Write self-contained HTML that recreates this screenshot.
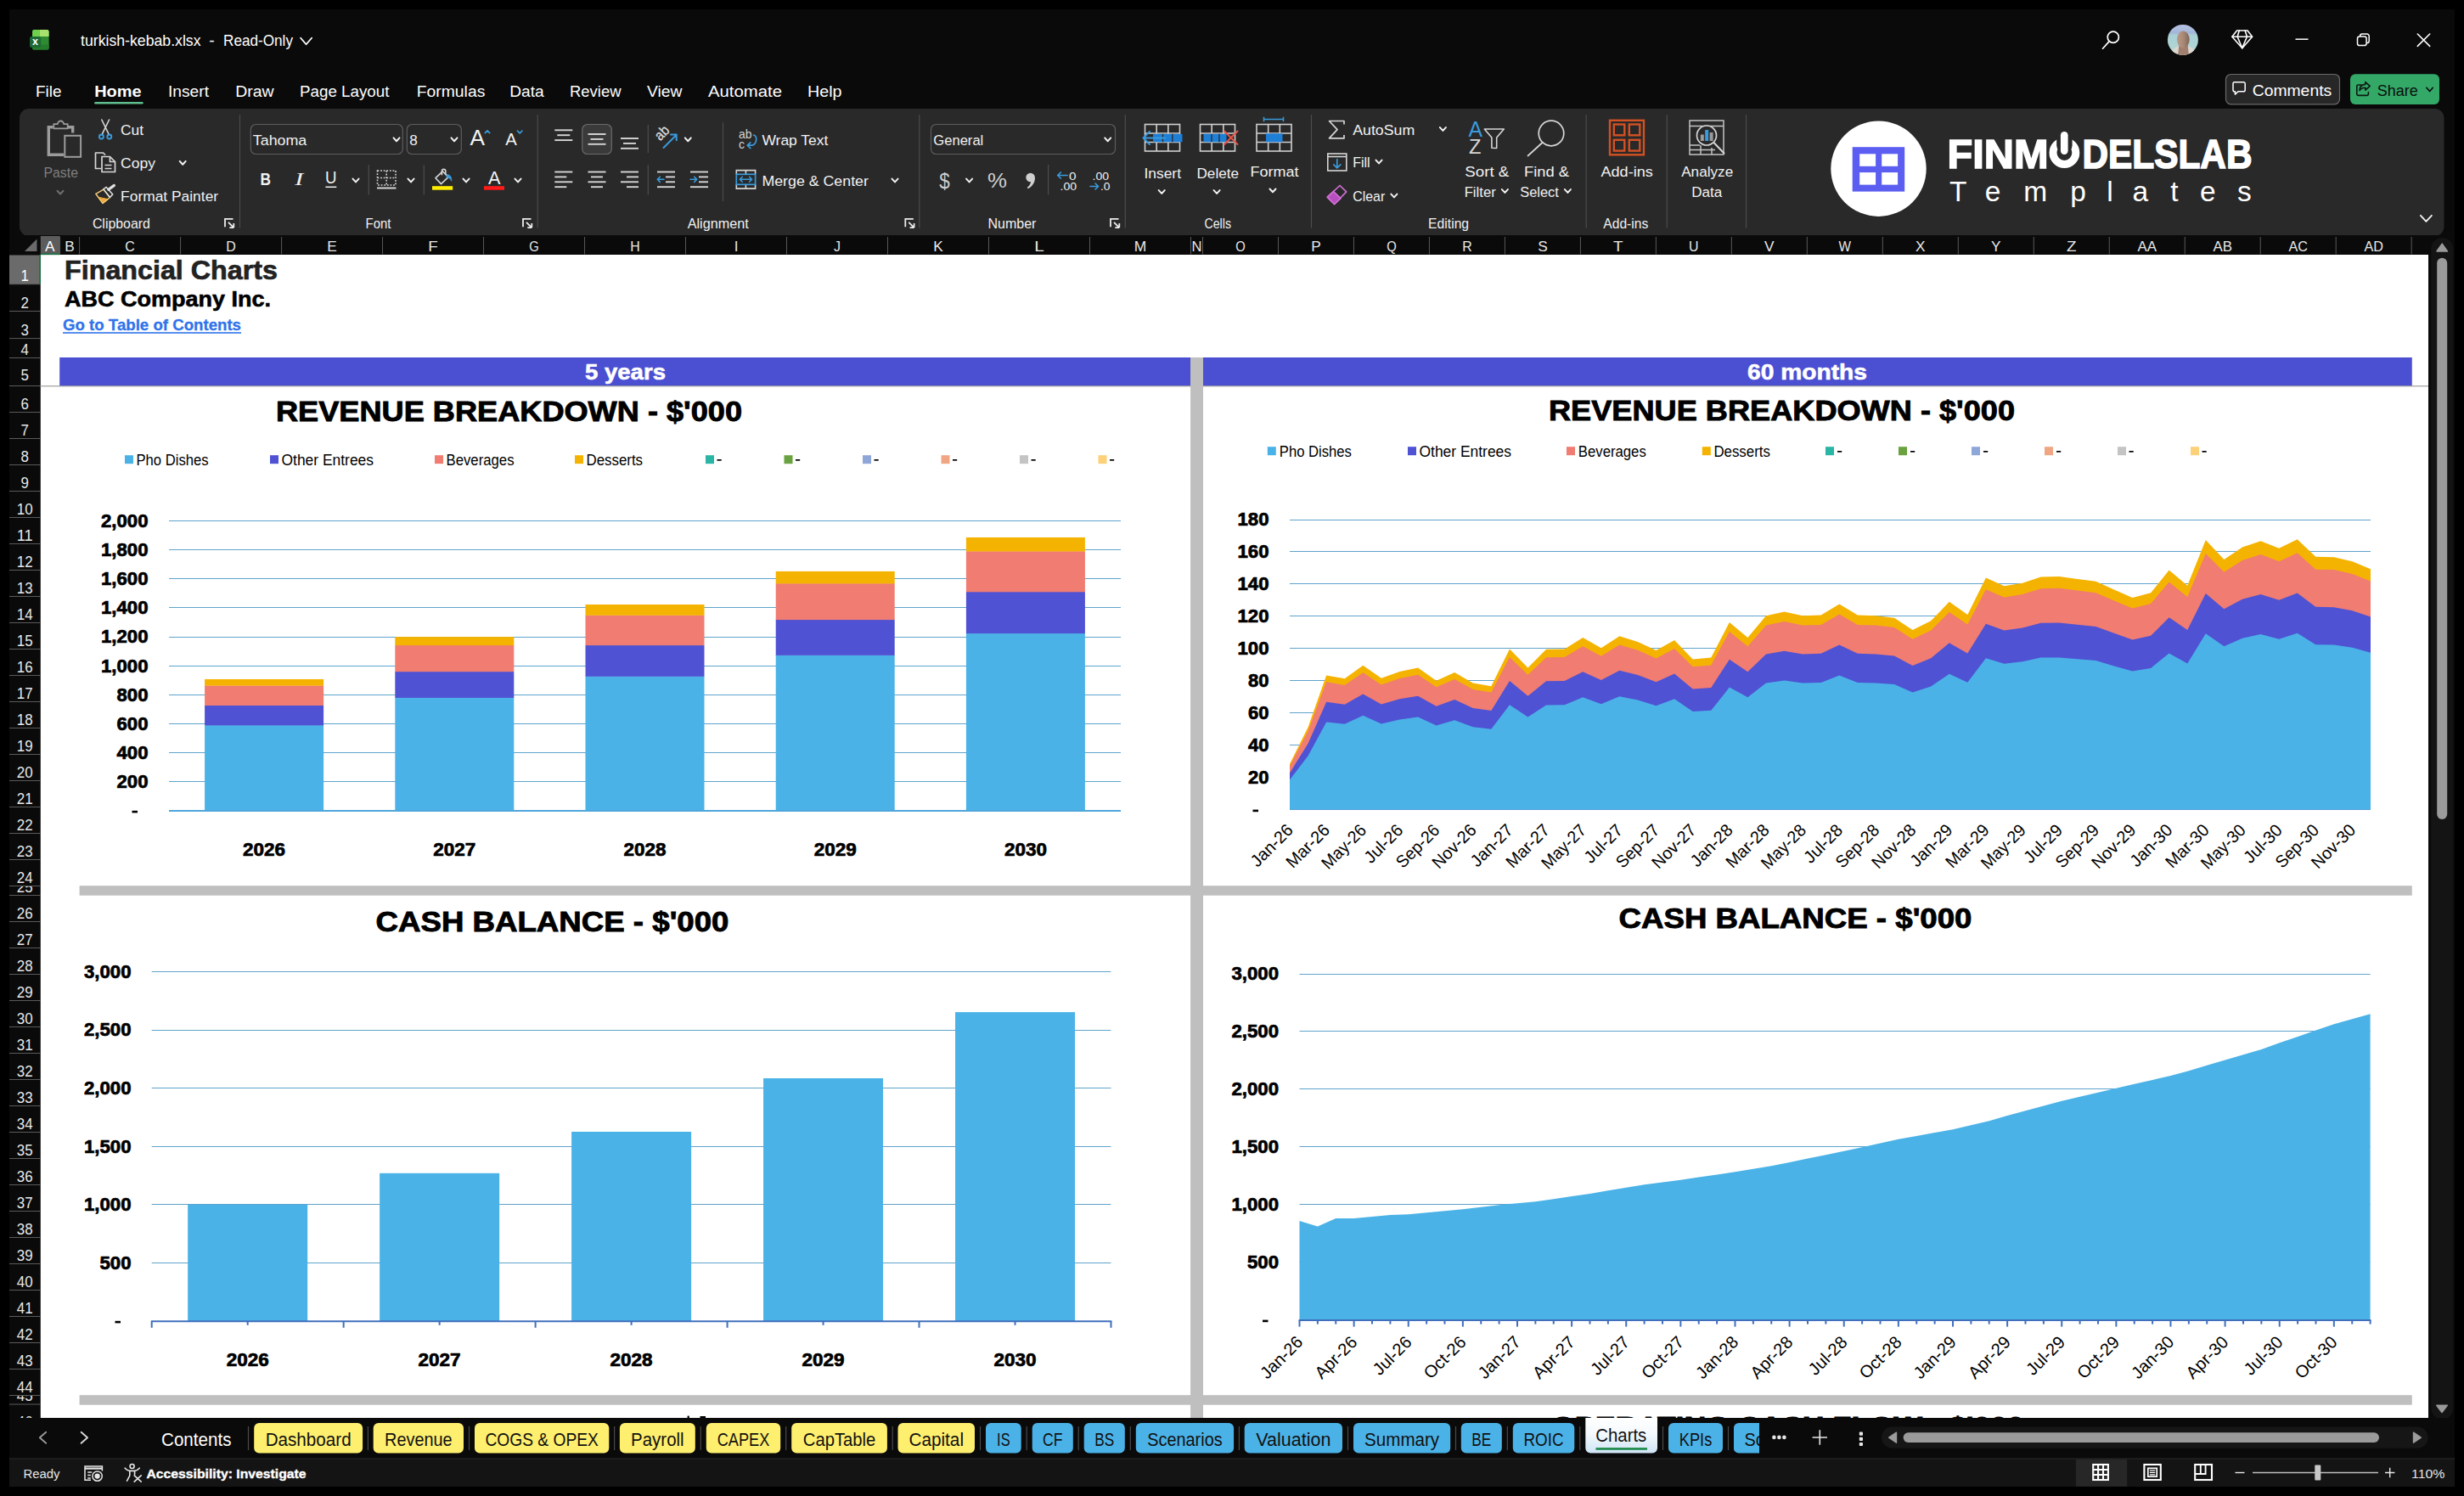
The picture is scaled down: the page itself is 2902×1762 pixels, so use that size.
<!DOCTYPE html>
<html lang="en">
<head>
<meta charset="utf-8">
<title>turkish-kebab.xlsx - Read-Only - Excel</title>
<style>
html,body{margin:0;padding:0;background:#000;}
body{width:2902px;height:1762px;overflow:hidden;position:relative;font-family:"Liberation Sans", sans-serif;}
.abs{position:absolute;display:block;}
#win{position:absolute;left:11px;top:11px;width:2880px;height:1740px;background:#0a0a0a;}
</style>
</head>
<body>
<div id="win"></div>
<svg class="abs titlebar" style="left:11px;top:11px" width="2880" height="117" viewBox="11 11 2880 117" font-family='"Liberation Sans", sans-serif'>
<g>
<rect x="38.1" y="35.1" width="19.5" height="23.5" fill="#2e8b32" rx="2.2"/>
<path d="M38.1 43.1 v-5.8 a2.2 2.2 0 0 1 2.2 -2.2 h6.3 v8 z" fill="#6ed04e" />
<path d="M46.6 35.1 h8.8 a2.2 2.2 0 0 1 2.2 2.2 v5.8 h-11 z" fill="#a8e26c" />
<path d="M38.1 52.5 h19.5 v3.9 a2.2 2.2 0 0 1 -2.2 2.2 h-15.1 a2.2 2.2 0 0 1 -2.2 -2.2 z" fill="#257d2c" />
<rect x="35.1" y="43.1" width="13" height="13" fill="#1d6a35" rx="2.2"/>
<text x="41.6" y="53.4" font-size="12.5" fill="#fff" font-weight="700" text-anchor="middle" >x</text>
</g>
<text x="95" y="54.4" font-size="18.2" fill="#fff" textLength="141.5" lengthAdjust="spacingAndGlyphs" >turkish-kebab.xlsx</text>
<text x="246.3" y="54.4" font-size="18.2" fill="#fff" textLength="6.5" lengthAdjust="spacingAndGlyphs" >-</text>
<text x="263" y="54.4" font-size="18.2" fill="#fff" textLength="82" lengthAdjust="spacingAndGlyphs" >Read-Only</text>
<path d="M354.1 44.75 l6.5 7.5 l6.5 -7.5" fill="none" stroke="#fff" stroke-width="1.8" stroke-linecap="round" stroke-linejoin="round"/>
<text x="42" y="114.2" font-size="19.2" fill="#fff" textLength="30.5" lengthAdjust="spacingAndGlyphs" >File</text>
<text x="111.2" y="114.2" font-size="19.2" fill="#fff" font-weight="700" textLength="55.5" lengthAdjust="spacingAndGlyphs" >Home</text>
<text x="198" y="114.2" font-size="19.2" fill="#fff" textLength="48" lengthAdjust="spacingAndGlyphs" >Insert</text>
<text x="277.2" y="114.2" font-size="19.2" fill="#fff" textLength="45.5" lengthAdjust="spacingAndGlyphs" >Draw</text>
<text x="353" y="114.2" font-size="19.2" fill="#fff" textLength="105.5" lengthAdjust="spacingAndGlyphs" >Page Layout</text>
<text x="490.8" y="114.2" font-size="19.2" fill="#fff" textLength="80.5" lengthAdjust="spacingAndGlyphs" >Formulas</text>
<text x="600.2" y="114.2" font-size="19.2" fill="#fff" textLength="40.5" lengthAdjust="spacingAndGlyphs" >Data</text>
<text x="671" y="114.2" font-size="19.2" fill="#fff" textLength="60.5" lengthAdjust="spacingAndGlyphs" >Review</text>
<text x="762" y="114.2" font-size="19.2" fill="#fff" textLength="41.5" lengthAdjust="spacingAndGlyphs" >View</text>
<text x="834" y="114.2" font-size="19.2" fill="#fff" textLength="87" lengthAdjust="spacingAndGlyphs" >Automate</text>
<text x="951" y="114.2" font-size="19.2" fill="#fff" textLength="40.5" lengthAdjust="spacingAndGlyphs" >Help</text>
<rect x="111.2" y="120" width="57.5" height="2.6" fill="#5fbe8d" rx="1.3"/>
<g fill="none" stroke="#fff" stroke-width="1.7" stroke-linecap="round"><circle cx="2488.8" cy="43.8" r="6.6"/><path d="M2484 48.9 L2476.5 57.2"/></g>
<defs><clipPath id="avc"><circle cx="2570.9" cy="46.9" r="18"/></clipPath><linearGradient id="avg" x1="0" y1="0" x2="0" y2="1"><stop offset="0" stop-color="#b9c3e4"/><stop offset="0.28" stop-color="#a3b6d8"/><stop offset="0.36" stop-color="#a9d0d6"/><stop offset="1" stop-color="#b3d8d2"/></linearGradient><linearGradient id="avf" x1="0" y1="0" x2="1" y2="0"><stop offset="0" stop-color="#bb9a88"/><stop offset="0.55" stop-color="#a88674"/><stop offset="1" stop-color="#7d6457"/></linearGradient></defs>
<g clip-path="url(#avc)"><rect x="2552" y="28" width="38" height="38" fill="url(#avg)"/><path d="M2556 66 c1 -7 5 -10 10 -11.5 h11 c5 1.500 9 4.500 10 11.500 z" fill="#ddd6cf"/><path d="M2566.200 54 h10.600 l1.200 12 h-13 z" fill="#a07f6e"/><ellipse cx="2571.300" cy="46.600" rx="7.400" ry="10.200" fill="url(#avf)"/></g>
<g fill="none" stroke="#fff" stroke-width="1.6" stroke-linejoin="round" stroke-linecap="round"><path d="M2634.5 36 h12.5 l5.6 7.2 l-11.8 13.6 l-11.9 -13.6 z"/><path d="M2629 43.2 h23.5 M2637.3 36 l-2.2 7.2 l5.7 13.4 M2644.2 36 l2.2 7.2 l-5.6 13.4"/></g>
<line x1="2703.5" y1="46.2" x2="2718.5" y2="46.2" stroke="#fff" stroke-width="1.5" />
<g fill="none" stroke="#fff" stroke-width="1.5"><rect x="2776.5" y="43" width="10.6" height="10.6" rx="2.4"/><path d="M2779.6 43 v-0.6 a2.4 2.4 0 0 1 2.4 -2.4 h5.6 a2.6 2.6 0 0 1 2.6 2.6 v5.6 a2.4 2.4 0 0 1 -2.4 2.4 h-0.6"/></g>
<path d="M2847.3 40 l14.4 14.4 M2861.7 40 l-14.4 14.4" stroke="#fff" stroke-width="1.6" stroke-linecap="round"/>
<rect x="2621.5" y="87.5" width="134" height="35.3" fill="#272727" rx="6" stroke="#6a6a6a" stroke-width="1.2"/>
<path d="M2630 98.5 a1.8 1.8 0 0 1 1.8 -1.8 h10.6 a1.8 1.8 0 0 1 1.8 1.8 v7.4 a1.8 1.8 0 0 1 -1.8 1.8 h-6.4 l-3.6 3.4 v-3.4 h-0.6 a1.8 1.8 0 0 1 -1.8 -1.8 z" fill="none" stroke="#fff" stroke-width="1.5" stroke-linejoin="round"/>
<text x="2652.7" y="112.9" font-size="18.4" fill="#fff" textLength="93.5" lengthAdjust="spacingAndGlyphs" >Comments</text>
<rect x="2768" y="87.2" width="105" height="35.8" fill="#33a867" rx="6"/>
<g fill="none" stroke="#0c1a12" stroke-width="1.6" stroke-linejoin="round" stroke-linecap="round"><path d="M2781 100 h-3.6 a1.6 1.6 0 0 0 -1.6 1.6 v9.2 a1.6 1.6 0 0 0 1.6 1.6 h10.4 a1.6 1.6 0 0 0 1.6 -1.6 v-2.2"/><path d="M2785.8 96.6 l5.4 4.8 l-5.4 4.8 v-3 c-3.6 0 -5.6 1.2 -6.8 3.4 c0 -4.2 2.4 -6.8 6.8 -7.2 z"/></g>
<text x="2799.8" y="112.9" font-size="18.4" fill="#0a0f0c" textLength="48" lengthAdjust="spacingAndGlyphs" >Share</text>
<path d="M2857.85 103.3 l3.75 4.2 l3.75 -4.2" fill="none" stroke="#0a0f0c" stroke-width="1.7" stroke-linecap="round" stroke-linejoin="round"/>
</svg>
<svg class="abs ribbon" style="left:11px;top:128px" width="2880" height="151" viewBox="11 128 2880 151" font-family='"Liberation Sans", sans-serif'>
<rect x="23" y="128" width="2855.5" height="150" fill="#292929" rx="11"/>
<g fill="none" stroke="#9c9c9c" stroke-width="3.4" stroke-linejoin="miter"><path d="M75 182.3 H57.3 V149.8 H62.5"/><path d="M80 149.8 H85.7 V156.5"/><path d="M63.3 151.3 v-5.2 h4.6 a3.6 3.6 0 0 1 7.2 0 h4.6 v5.2 z" stroke-width="1.8" stroke-linejoin="round"/><rect x="76.3" y="159.8" width="18.8" height="25" stroke-width="2" fill="#292929"/></g>
<text x="51.5" y="209.3" font-size="17.4" fill="#7f7f7f" textLength="40.5" lengthAdjust="spacingAndGlyphs" >Paste</text>
<path d="M67.5 224.7 l3.5 3.8 l3.5 -3.8" fill="none" stroke="#6f6f6f" stroke-width="2" stroke-linecap="round" stroke-linejoin="round"/>
<g fill="none" stroke-linecap="round"><path d="M119.8 141 l8.6 17.6 M128.6 141 l-8.6 17.6" stroke="#d6d6d6" stroke-width="1.6"/><circle cx="119.4" cy="161" r="2.5" stroke="#3a9bdc" stroke-width="1.9"/><circle cx="128.8" cy="161" r="2.5" stroke="#3a9bdc" stroke-width="1.9"/></g>
<text x="142.1" y="158.9" font-size="17.4" fill="#f2f2f2" textLength="27" lengthAdjust="spacingAndGlyphs" >Cut</text>
<g fill="none" stroke="#d6d6d6" stroke-width="1.7" stroke-linejoin="round"><path d="M119 198.5 h-6.5 v-18.5 h9 l2.5 2.5"/><path d="M120 184.5 h9.5 l6 6 v12 h-15.5 z"/><path d="M129.5 184.5 v6 h6"/><path d="M123.5 194.5 h8 M123.5 198.5 h8" stroke-width="1.3"/></g>
<text x="142.1" y="197.7" font-size="17.4" fill="#f2f2f2" textLength="41" lengthAdjust="spacingAndGlyphs" >Copy</text>
<path d="M211.7 189.9 l3.5 3.8 l3.5 -3.8" fill="none" stroke="#f2f2f2" stroke-width="2" stroke-linecap="round" stroke-linejoin="round"/>
<g stroke-linejoin="round" stroke-linecap="round"><path d="M117 232.5 l10.5 2.2 l-6.2 4.6 z" fill="#f0a838" stroke="#f0a838" stroke-width="1"/><path d="M112.8 228.3 l9.2 -5.2 l7.4 9.4 l-8.3 7 z" fill="none" stroke="#f2c879" stroke-width="1.5"/><path d="M121.8 222.8 l3.4 -2.4 l7.6 8.6 l-3.4 3.4 z" fill="none" stroke="#e0e0e0" stroke-width="1.5"/><path d="M127.8 223.3 l6.6 -4.9" fill="none" stroke="#e0e0e0" stroke-width="3.2"/></g>
<text x="142.1" y="236.9" font-size="17.4" fill="#f2f2f2" textLength="115" lengthAdjust="spacingAndGlyphs" >Format Painter</text>
<text x="108.9" y="268.5" font-size="16.2" fill="#f2f2f2" textLength="68" lengthAdjust="spacingAndGlyphs" >Clipboard</text>
<g fill="none" stroke="#ececec" stroke-width="1.8"><path d="M274.5 257.8 h-9.5 v9.5"/><path d="M269 261.8 l6 6 M275.3 268.1 v-5 M275.3 268.1 h-5"/></g>
<line x1="282.5" y1="135.3" x2="282.5" y2="268.5" stroke="#4c4c4c" stroke-width="1.2" />
<rect x="295.3" y="146.5" width="179" height="35" fill="none" rx="6" stroke="#5e5e5e" stroke-width="1.2"/>
<text x="297.8" y="170.7" font-size="17.4" fill="#f2f2f2" textLength="63.5" lengthAdjust="spacingAndGlyphs" >Tahoma</text>
<path d="M463.5 162.4 l3.5 3.8 l3.5 -3.8" fill="none" stroke="#f2f2f2" stroke-width="2" stroke-linecap="round" stroke-linejoin="round"/>
<rect x="479.3" y="146.5" width="64" height="35" fill="none" rx="6" stroke="#5e5e5e" stroke-width="1.2"/>
<text x="482.3" y="170.7" font-size="17.4" fill="#f2f2f2" textLength="9.5" lengthAdjust="spacingAndGlyphs" >8</text>
<path d="M531.5 162.4 l3.5 3.8 l3.5 -3.8" fill="none" stroke="#f2f2f2" stroke-width="2" stroke-linecap="round" stroke-linejoin="round"/>
<text x="553.5" y="171.3" font-size="25.5" fill="#f2f2f2" textLength="17.5" lengthAdjust="spacingAndGlyphs" >A</text>
<path d="M571.3 156.6 l2.7 -2.8 l2.7 2.8" fill="none" stroke="#3a9bdc" stroke-width="1.7" stroke-linecap="round" stroke-linejoin="round"/>
<text x="595.3" y="171.3" font-size="20.5" fill="#f2f2f2" textLength="13.5" lengthAdjust="spacingAndGlyphs" >A</text>
<path d="M609.5 154.2 l2.7 2.8 l2.7 -2.8" fill="none" stroke="#3a9bdc" stroke-width="1.7" stroke-linecap="round" stroke-linejoin="round"/>
<text x="306.5" y="217.8" font-size="20.5" fill="#f2f2f2" font-weight="700" textLength="12.5" lengthAdjust="spacingAndGlyphs" >B</text>
<text x="347.3" y="217.8" font-size="20.5" fill="#f2f2f2" textLength="10" lengthAdjust="spacingAndGlyphs" style="font-style:italic;font-family:'Liberation Serif',serif" >I</text>
<text x="383" y="215.8" font-size="19.5" fill="#f2f2f2" textLength="13.5" lengthAdjust="spacingAndGlyphs" >U</text>
<line x1="383.4" y1="220.3" x2="396.3" y2="220.3" stroke="#f2f2f2" stroke-width="1.5" />
<path d="M415.5 210.6 l3.5 3.8 l3.5 -3.8" fill="none" stroke="#f2f2f2" stroke-width="2" stroke-linecap="round" stroke-linejoin="round"/>
<line x1="434.3" y1="194.2" x2="434.3" y2="229.5" stroke="#4c4c4c" stroke-width="1.2" />
<g fill="none" stroke="#d6d6d6" stroke-width="1.6"><path d="M444.5 201 h21.5 v17 h-21.5 z M455.2 201 v17 M444.5 209.5 h21.5" stroke-dasharray="1.8 1.8"/><path d="M444 221.5 h22.5" stroke-width="2"/></g>
<path d="M480.5 210.6 l3.5 3.8 l3.5 -3.8" fill="none" stroke="#f2f2f2" stroke-width="2" stroke-linecap="round" stroke-linejoin="round"/>
<line x1="499.3" y1="194.2" x2="499.3" y2="229.5" stroke="#4c4c4c" stroke-width="1.2" />
<g fill="none" stroke="#d6d6d6" stroke-width="1.6" stroke-linejoin="round" stroke-linecap="round"><path d="M513 209.7 L519.5 216.6 L528 208.7 L521.3 201.8 Z"/><path d="M520.4 205.8 v-4.2 a2.2 2.2 0 0 1 4.4 0 v3.6"/></g>
<path d="M526.3 205.6 c4.2 0.2 6 3.6 5.3 7.6 c-0.8 -2.6 -2.4 -4 -5.6 -4.4 z" fill="#3a9bdc" stroke="#3a9bdc" stroke-width="0.8" stroke-linejoin="round"/>
<rect x="509" y="219.2" width="24.2" height="4.5" fill="#ffed00" />
<path d="M545.5 210.6 l3.5 3.8 l3.5 -3.8" fill="none" stroke="#f2f2f2" stroke-width="2" stroke-linecap="round" stroke-linejoin="round"/>
<text x="575" y="216.8" font-size="21.5" fill="#f2f2f2" textLength="14.5" lengthAdjust="spacingAndGlyphs" >A</text>
<rect x="570" y="219.2" width="24" height="4.5" fill="#ff1a1a" />
<path d="M606.5 210.6 l3.5 3.8 l3.5 -3.8" fill="none" stroke="#f2f2f2" stroke-width="2" stroke-linecap="round" stroke-linejoin="round"/>
<text x="430.5" y="268.5" font-size="16.2" fill="#f2f2f2" textLength="30" lengthAdjust="spacingAndGlyphs" >Font</text>
<g fill="none" stroke="#ececec" stroke-width="1.8"><path d="M625.5 257.8 h-9.5 v9.5"/><path d="M620 261.8 l6 6 M626.3 268.1 v-5 M626.3 268.1 h-5"/></g>
<line x1="633.2" y1="135.3" x2="633.2" y2="268.5" stroke="#4c4c4c" stroke-width="1.2" />
<line x1="653.3" y1="153.3" x2="674.3" y2="153.3" stroke="#d6d6d6" stroke-width="1.9" /><line x1="656.3" y1="159.2" x2="671.3" y2="159.2" stroke="#d6d6d6" stroke-width="1.9" /><line x1="653.3" y1="165.1" x2="674.3" y2="165.1" stroke="#d6d6d6" stroke-width="1.9" />
<rect x="685.8" y="146.5" width="34.5" height="35" fill="#3a3a3a" rx="6" stroke="#6b6b6b" stroke-width="1.2"/>
<line x1="692.5" y1="158" x2="713.5" y2="158" stroke="#d6d6d6" stroke-width="1.9" /><line x1="695.5" y1="163.9" x2="710.5" y2="163.9" stroke="#d6d6d6" stroke-width="1.9" /><line x1="692.5" y1="169.8" x2="713.5" y2="169.8" stroke="#d6d6d6" stroke-width="1.9" />
<line x1="731" y1="163" x2="752" y2="163" stroke="#d6d6d6" stroke-width="1.9" /><line x1="734" y1="168.9" x2="749" y2="168.9" stroke="#d6d6d6" stroke-width="1.9" /><line x1="731" y1="174.8" x2="752" y2="174.8" stroke="#d6d6d6" stroke-width="1.9" />
<line x1="763.3" y1="147" x2="763.3" y2="180" stroke="#4c4c4c" stroke-width="1.2" />
<text x="0" y="0" font-size="17" fill="#dcdcdc" textLength="17" lengthAdjust="spacingAndGlyphs" style="stroke:#dcdcdc;stroke-width:0.3px" transform="translate(777.5 166.5) rotate(-45)">ab</text>
<path d="M781.5 174 l15 -15 M790 158.6 h6.7 v6.7" fill="none" stroke="#3a9bdc" stroke-width="2" stroke-linecap="round" stroke-linejoin="round"/>
<path d="M806.8 162.4 l3.5 3.8 l3.5 -3.8" fill="none" stroke="#f2f2f2" stroke-width="2" stroke-linecap="round" stroke-linejoin="round"/>
<line x1="851.5" y1="144.2" x2="851.5" y2="237.2" stroke="#4c4c4c" stroke-width="1.2" />
<text x="870" y="162.5" font-size="14.5" fill="#d6d6d6" textLength="15.5" lengthAdjust="spacingAndGlyphs" >ab</text>
<text x="870" y="175" font-size="14.5" fill="#d6d6d6" textLength="7" lengthAdjust="spacingAndGlyphs" >c</text>
<path d="M887.5 159 c4.5 1 4.5 10 -1.5 12.2 h-5.5 M883.8 167.8 l-3.6 3.4 l3.6 3.4" fill="none" stroke="#3a9bdc" stroke-width="1.7" stroke-linecap="round" stroke-linejoin="round"/>
<text x="897.4" y="170.7" font-size="17.4" fill="#f2f2f2" textLength="78" lengthAdjust="spacingAndGlyphs" >Wrap Text</text>
<line x1="653.3" y1="202.5" x2="674.3" y2="202.5" stroke="#d6d6d6" stroke-width="1.9" /><line x1="653.3" y1="208.4" x2="667.3" y2="208.4" stroke="#d6d6d6" stroke-width="1.9" /><line x1="653.3" y1="214.3" x2="674.3" y2="214.3" stroke="#d6d6d6" stroke-width="1.9" /><line x1="653.3" y1="220.2" x2="667.3" y2="220.2" stroke="#d6d6d6" stroke-width="1.9" />
<line x1="692.5" y1="202.5" x2="713.5" y2="202.5" stroke="#d6d6d6" stroke-width="1.9" /><line x1="696" y1="208.4" x2="710" y2="208.4" stroke="#d6d6d6" stroke-width="1.9" /><line x1="692.5" y1="214.3" x2="713.5" y2="214.3" stroke="#d6d6d6" stroke-width="1.9" /><line x1="696" y1="220.2" x2="710" y2="220.2" stroke="#d6d6d6" stroke-width="1.9" />
<line x1="731" y1="202.5" x2="752" y2="202.5" stroke="#d6d6d6" stroke-width="1.9" /><line x1="738" y1="208.4" x2="752" y2="208.4" stroke="#d6d6d6" stroke-width="1.9" /><line x1="731" y1="214.3" x2="752" y2="214.3" stroke="#d6d6d6" stroke-width="1.9" /><line x1="738" y1="220.2" x2="752" y2="220.2" stroke="#d6d6d6" stroke-width="1.9" />
<line x1="763.3" y1="194.2" x2="763.3" y2="229.5" stroke="#4c4c4c" stroke-width="1.2" />
<line x1="774" y1="202.5" x2="795" y2="202.5" stroke="#d6d6d6" stroke-width="1.9" /><line x1="784" y1="208.4" x2="795" y2="208.4" stroke="#d6d6d6" stroke-width="1.9" /><line x1="784" y1="214.3" x2="795" y2="214.3" stroke="#d6d6d6" stroke-width="1.9" /><line x1="774" y1="220.2" x2="795" y2="220.2" stroke="#d6d6d6" stroke-width="1.9" />
<path d="M782 211.3 h-7.5 M777.3 208.2 l-3 3.1 l3 3.1" fill="none" stroke="#3a9bdc" stroke-width="1.6" stroke-linecap="round" stroke-linejoin="round"/>
<line x1="813" y1="202.5" x2="834" y2="202.5" stroke="#d6d6d6" stroke-width="1.9" /><line x1="823" y1="208.4" x2="834" y2="208.4" stroke="#d6d6d6" stroke-width="1.9" /><line x1="823" y1="214.3" x2="834" y2="214.3" stroke="#d6d6d6" stroke-width="1.9" /><line x1="813" y1="220.2" x2="834" y2="220.2" stroke="#d6d6d6" stroke-width="1.9" />
<path d="M813 211.3 h7.5 M817.7 208.2 l3 3.1 l-3 3.1" fill="none" stroke="#3a9bdc" stroke-width="1.6" stroke-linecap="round" stroke-linejoin="round"/>
<g fill="none" stroke="#d6d6d6" stroke-width="1.6"><path d="M867.3 205.3 v-4.7 h22.3 v4.7 M867.3 217.3 v4.8 h22.3 v-4.8 M878.4 200.6 v4.7 M878.4 217.3 v4.8"/></g>
<rect x="867.3" y="205.3" width="22.3" height="12" fill="none" stroke="#3a9bdc" stroke-width="1.7"/>
<path d="M871.3 211.3 h14.3 M874.3 208.3 l-3 3 l3 3 M882.6 208.3 l3 3 l-3 3" fill="none" stroke="#3a9bdc" stroke-width="1.6" stroke-linecap="round" stroke-linejoin="round"/>
<text x="897.4" y="218.9" font-size="17.4" fill="#f2f2f2" textLength="125.5" lengthAdjust="spacingAndGlyphs" >Merge &amp; Center</text>
<path d="M1050.5 210.6 l3.5 3.8 l3.5 -3.8" fill="none" stroke="#f2f2f2" stroke-width="2" stroke-linecap="round" stroke-linejoin="round"/>
<text x="809.7" y="268.5" font-size="16.2" fill="#f2f2f2" textLength="72" lengthAdjust="spacingAndGlyphs" >Alignment</text>
<g fill="none" stroke="#ececec" stroke-width="1.8"><path d="M1075.8 257.8 h-9.5 v9.5"/><path d="M1070.3 261.8 l6 6 M1076.6 268.1 v-5 M1076.6 268.1 h-5"/></g>
<line x1="1082.8" y1="135.3" x2="1082.8" y2="268.5" stroke="#4c4c4c" stroke-width="1.2" />
<rect x="1096.5" y="146.5" width="217" height="35" fill="none" rx="6" stroke="#5e5e5e" stroke-width="1.2"/>
<text x="1099.3" y="170.7" font-size="17.4" fill="#f2f2f2" textLength="59" lengthAdjust="spacingAndGlyphs" >General</text>
<path d="M1301.2 162.4 l3.5 3.8 l3.5 -3.8" fill="none" stroke="#f2f2f2" stroke-width="2" stroke-linecap="round" stroke-linejoin="round"/>
<text x="1106.3" y="221.5" font-size="25" fill="#cfcfcf" textLength="12.5" lengthAdjust="spacingAndGlyphs" >$</text>
<path d="M1138.1 210.6 l3.5 3.8 l3.5 -3.8" fill="none" stroke="#f2f2f2" stroke-width="2" stroke-linecap="round" stroke-linejoin="round"/>
<text x="1163" y="220.5" font-size="23.5" fill="#cfcfcf" textLength="23" lengthAdjust="spacingAndGlyphs" >%</text>
<circle cx="1213.6" cy="209" r="5.3" fill="#cfcfcf"/>
<path d="M1218.9 209 c0.2 6 -3 10.6 -8.2 13.2 l-0.9 -1.4 c2.8 -2.2 4.3 -4.8 4.4 -7.6 z" fill="#cfcfcf" />
<line x1="1234.6" y1="194" x2="1234.6" y2="229.5" stroke="#4c4c4c" stroke-width="1.2" />
<text x="1259" y="211.8" font-size="13.5" fill="#f2f2f2" textLength="8.5" lengthAdjust="spacingAndGlyphs" >0</text>
<text x="1248.5" y="224" font-size="13.5" fill="#f2f2f2" textLength="19.5" lengthAdjust="spacingAndGlyphs" >.00</text>
<path d="M1257 206.5 h-11 M1249.3 203 l-3.6 3.5 l3.6 3.5" fill="none" stroke="#3a9bdc" stroke-width="1.7" stroke-linecap="round" stroke-linejoin="round"/>
<text x="1286.5" y="211.8" font-size="13.5" fill="#f2f2f2" textLength="19.5" lengthAdjust="spacingAndGlyphs" >.00</text>
<text x="1296" y="224" font-size="13.5" fill="#f2f2f2" textLength="11.5" lengthAdjust="spacingAndGlyphs" >.0</text>
<path d="M1284 219.5 h9.5 M1290 216 l3.6 3.5 l-3.6 3.5" fill="none" stroke="#3a9bdc" stroke-width="1.6" stroke-linecap="round" stroke-linejoin="round"/>
<text x="1163.4" y="268.5" font-size="16.2" fill="#f2f2f2" textLength="57" lengthAdjust="spacingAndGlyphs" >Number</text>
<g fill="none" stroke="#ececec" stroke-width="1.8"><path d="M1317.5 257.8 h-9.5 v9.5"/><path d="M1312 261.8 l6 6 M1318.3 268.1 v-5 M1318.3 268.1 h-5"/></g>
<line x1="1325.3" y1="135.3" x2="1325.3" y2="268.5" stroke="#4c4c4c" stroke-width="1.2" />
<g fill="none" stroke="#d0d0d0" stroke-width="1.6"><rect x="1348.5" y="146.5" width="41" height="31.5"/><path d="M1362.17 146.5 v31.5 M1375.83 146.5 v31.5 M1348.5 157 h41 M1348.5 167.5 h41 "/></g>
<rect x="1358" y="157.8" width="34.5" height="9.5" fill="#1e7fd6" />
<line x1="1369.5" y1="157.8" x2="1369.5" y2="167.3" stroke="#292929" stroke-width="1.3" />
<line x1="1380.8" y1="157.8" x2="1380.8" y2="167.3" stroke="#292929" stroke-width="1.3" />
<path d="M1372 162.5 h-25 M1354 155 l-7.5 7.5 l7.5 7.5" fill="none" stroke="#3a9bdc" stroke-width="2" stroke-linecap="round" stroke-linejoin="round"/>
<text x="1347.5" y="210.2" font-size="17.4" fill="#f2f2f2" textLength="43.5" lengthAdjust="spacingAndGlyphs" >Insert</text>
<path d="M1364.7 224.1 l3.5 3.8 l3.5 -3.8" fill="none" stroke="#f2f2f2" stroke-width="2" stroke-linecap="round" stroke-linejoin="round"/>
<g fill="none" stroke="#d0d0d0" stroke-width="1.6"><rect x="1413.5" y="146.5" width="41" height="31.5"/><path d="M1427.17 146.5 v31.5 M1440.83 146.5 v31.5 M1413.5 157 h41 M1413.5 167.5 h41 "/></g>
<rect x="1417.5" y="157.8" width="27" height="9.5" fill="#1e7fd6" />
<line x1="1427" y1="157.8" x2="1427" y2="167.3" stroke="#292929" stroke-width="1.3" />
<line x1="1436" y1="157.8" x2="1436" y2="167.3" stroke="#292929" stroke-width="1.3" />
<path d="M1442 154.5 l15.5 15.5 M1457.5 154.5 l-15.5 15.5" fill="none" stroke="#e8524a" stroke-width="2" stroke-linecap="round"/>
<text x="1409.5" y="210.2" font-size="17.4" fill="#f2f2f2" textLength="49.5" lengthAdjust="spacingAndGlyphs" >Delete</text>
<path d="M1429.6 224.1 l3.5 3.8 l3.5 -3.8" fill="none" stroke="#f2f2f2" stroke-width="2" stroke-linecap="round" stroke-linejoin="round"/>
<g fill="none" stroke="#d0d0d0" stroke-width="1.6"><rect x="1480" y="146.5" width="41" height="31.5"/><path d="M1493.67 146.5 v31.5 M1507.33 146.5 v31.5 M1480 157 h41 M1480 167.5 h41 "/></g>
<rect x="1491" y="157.3" width="19.5" height="10" fill="#1e7fd6" />
<path d="M1488.5 140.5 h23 M1488.5 137.8 v5.4 M1511.5 137.8 v5.4" fill="none" stroke="#3a9bdc" stroke-width="1.5" />
<text x="1472.5" y="207.8" font-size="17.4" fill="#f2f2f2" textLength="57" lengthAdjust="spacingAndGlyphs" >Format</text>
<path d="M1495.5 222.5 l3.5 3.8 l3.5 -3.8" fill="none" stroke="#f2f2f2" stroke-width="2" stroke-linecap="round" stroke-linejoin="round"/>
<text x="1418.5" y="268.5" font-size="16.2" fill="#f2f2f2" textLength="31.5" lengthAdjust="spacingAndGlyphs" >Cells</text>
<line x1="1544.5" y1="135.3" x2="1544.5" y2="268.5" stroke="#4c4c4c" stroke-width="1.2" />
<path d="M1583 146.5 v-4 h-17.5 l9.5 10.2 l-9.5 10.2 h17.5 v-4" fill="none" stroke="#d6d6d6" stroke-width="1.7" stroke-linejoin="round"/>
<text x="1593.2" y="159.1" font-size="17.4" fill="#f2f2f2" textLength="73" lengthAdjust="spacingAndGlyphs" >AutoSum</text>
<path d="M1695.9 150.1 l3.5 3.8 l3.5 -3.8" fill="none" stroke="#f2f2f2" stroke-width="2" stroke-linecap="round" stroke-linejoin="round"/>
<g fill="none" stroke="#d6d6d6" stroke-width="1.6"><rect x="1563.8" y="181" width="22" height="20"/><path d="M1563.8 184.5 h22"/></g>
<path d="M1574.8 187.5 v10 M1570.8 193.8 l4 4 l4 -4" fill="none" stroke="#3a9bdc" stroke-width="1.7" stroke-linecap="round" stroke-linejoin="round"/>
<text x="1593.2" y="197.4" font-size="17.4" fill="#f2f2f2" textLength="20.5" lengthAdjust="spacingAndGlyphs" >Fill</text>
<path d="M1620.5 188.6 l3.5 3.8 l3.5 -3.8" fill="none" stroke="#f2f2f2" stroke-width="2" stroke-linecap="round" stroke-linejoin="round"/>
<g stroke="#cf6fd3" stroke-width="1.7" stroke-linejoin="round"><path d="M1563.3 232.1 L1578 218.5 L1585.7 225.8 L1571.6 240.5 Z" fill="none"/><path d="M1563.3 232.1 L1570.6 225.5 L1579 233.6 L1571.6 240.5 Z" fill="#b84fbe"/></g>
<text x="1593.2" y="237" font-size="17.4" fill="#f2f2f2" textLength="38" lengthAdjust="spacingAndGlyphs" >Clear</text>
<path d="M1638.4 228.6 l3.5 3.8 l3.5 -3.8" fill="none" stroke="#f2f2f2" stroke-width="2" stroke-linecap="round" stroke-linejoin="round"/>
<text x="1729.6" y="160.8" font-size="26" fill="#3a9bdc" textLength="16.5" lengthAdjust="spacingAndGlyphs" >A</text>
<text x="1730" y="181.4" font-size="24" fill="#d6d6d6" textLength="14.5" lengthAdjust="spacingAndGlyphs" >Z</text>
<path d="M1748.3 152 h23 l-8.6 10 v12.5 l-5.8 -0.2 v-12.3 z" fill="none" stroke="#d6d6d6" stroke-width="1.6" stroke-linejoin="round"/>
<text x="1725.3" y="208" font-size="17.4" fill="#f2f2f2" textLength="52" lengthAdjust="spacingAndGlyphs" >Sort &amp;</text>
<text x="1724.7" y="232.4" font-size="17.4" fill="#f2f2f2" textLength="37" lengthAdjust="spacingAndGlyphs" >Filter</text>
<path d="M1768.9 223.1 l3.5 3.8 l3.5 -3.8" fill="none" stroke="#f2f2f2" stroke-width="2" stroke-linecap="round" stroke-linejoin="round"/>
<g fill="none" stroke="#d6d6d6" stroke-width="1.7" stroke-linecap="round"><circle cx="1827" cy="157" r="14.8"/><path d="M1816.5 168 l-17 15.5"/></g>
<text x="1795.1" y="208" font-size="17.4" fill="#f2f2f2" textLength="53" lengthAdjust="spacingAndGlyphs" >Find &amp;</text>
<text x="1790.3" y="232.4" font-size="17.4" fill="#f2f2f2" textLength="45.5" lengthAdjust="spacingAndGlyphs" >Select</text>
<path d="M1842.9 223.1 l3.5 3.8 l3.5 -3.8" fill="none" stroke="#f2f2f2" stroke-width="2" stroke-linecap="round" stroke-linejoin="round"/>
<text x="1682.1" y="268.5" font-size="16.2" fill="#f2f2f2" textLength="48" lengthAdjust="spacingAndGlyphs" >Editing</text>
<line x1="1868.2" y1="135.3" x2="1868.2" y2="268.5" stroke="#4c4c4c" stroke-width="1.2" />
<g fill="none" stroke="#d35123" stroke-width="2.4"><rect x="1896" y="141.8" width="40" height="40.5"/><rect x="1900.8" y="146.5" width="12.5" height="12.8"/><rect x="1918.8" y="146.5" width="12.5" height="12.8"/><rect x="1900.8" y="164.8" width="12.5" height="12.8"/><rect x="1918.8" y="164.8" width="12.5" height="12.8"/></g>
<text x="1885.4" y="208" font-size="17.4" fill="#f2f2f2" textLength="61.5" lengthAdjust="spacingAndGlyphs" >Add-ins</text>
<text x="1888.3" y="268.5" font-size="16.2" fill="#f2f2f2" textLength="53" lengthAdjust="spacingAndGlyphs" >Add-ins</text>
<line x1="1963.3" y1="135.3" x2="1963.3" y2="268.5" stroke="#4c4c4c" stroke-width="1.2" />
<g fill="none" stroke="#c4c4c4" stroke-width="1.5"><rect x="1990" y="142" width="40" height="40"/><path d="M1990 148.5 h40 M1990 171 h12 M1990 176.5 h30 M2003 171 v11 M2016 174 v8"/></g>
<circle cx="2010" cy="159.5" r="11.5" fill="#292929" stroke="#d6d6d6" stroke-width="1.7"/>
<rect x="2002.8" y="158.5" width="4" height="7.5" fill="#9a9a9a" />
<rect x="2008.2" y="153" width="4" height="13" fill="#3a9bdc" />
<rect x="2013.6" y="156" width="4" height="10" fill="#9a9a9a" />
<line x1="2018.5" y1="168" x2="2031" y2="181" stroke="#d6d6d6" stroke-width="2" />
<text x="1980.2" y="208" font-size="17.4" fill="#f2f2f2" textLength="61" lengthAdjust="spacingAndGlyphs" >Analyze</text>
<text x="1992.2" y="232.4" font-size="17.4" fill="#f2f2f2" textLength="36" lengthAdjust="spacingAndGlyphs" >Data</text>
<line x1="2056.5" y1="135.3" x2="2056.5" y2="268.5" stroke="#4c4c4c" stroke-width="1.2" />
<circle cx="2212.5" cy="198.7" r="56.2" fill="#fff"/>
<rect x="2181.7" y="173.2" width="61.5" height="52.4" fill="#5b5ef0" />
<rect x="2190.2" y="181.3" width="18.9" height="14.5" fill="#fff" />
<rect x="2190.2" y="203.1" width="18.9" height="14.5" fill="#fff" />
<rect x="2216.2" y="181.3" width="18.9" height="14.5" fill="#fff" />
<rect x="2216.2" y="203.1" width="18.9" height="14.5" fill="#fff" />
<text x="2293.5" y="197.6" font-size="48.8" fill="#fff" font-weight="700" textLength="119" lengthAdjust="spacingAndGlyphs" style="stroke:#fff;stroke-width:1.6px" >FINM</text>
<circle cx="2431.4" cy="180" r="13.4" fill="none" stroke="#fff" stroke-width="9"/>
<rect x="2422.2" y="150.5" width="18.4" height="30" fill="#292929" rx="9.2"/>
<rect x="2426.9" y="154.9" width="8.7" height="27" fill="#fff" rx="4.3"/>
<text x="2452.5" y="197.6" font-size="48.8" fill="#fff" font-weight="700" textLength="200" lengthAdjust="spacingAndGlyphs" style="stroke:#fff;stroke-width:1.6px" >DELSLAB</text>
<text x="2306.2" y="236.9" font-size="33.5" fill="#fff" text-anchor="middle" >T</text>
<text x="2347" y="236.9" font-size="33.5" fill="#fff" text-anchor="middle" >e</text>
<text x="2397.2" y="236.9" font-size="33.5" fill="#fff" text-anchor="middle" >m</text>
<text x="2447.6" y="236.9" font-size="33.5" fill="#fff" text-anchor="middle" >p</text>
<text x="2485.1" y="236.9" font-size="33.5" fill="#fff" text-anchor="middle" >l</text>
<text x="2520.9" y="236.9" font-size="33.5" fill="#fff" text-anchor="middle" >a</text>
<text x="2560.9" y="236.9" font-size="33.5" fill="#fff" text-anchor="middle" >t</text>
<text x="2600.3" y="236.9" font-size="33.5" fill="#fff" text-anchor="middle" >e</text>
<text x="2643.3" y="236.9" font-size="33.5" fill="#fff" text-anchor="middle" >s</text>
<path d="M2850.9 253.8 l6.5 7 l6.5 -7" fill="none" stroke="#f2f2f2" stroke-width="1.8" stroke-linecap="round" stroke-linejoin="round"/>
</svg>
<svg class="abs sheet" style="left:11px;top:277px" width="2849" height="1393" viewBox="11 277 2849 1393" font-family='"Liberation Sans", sans-serif'>
<defs><clipPath id="rowclip"><rect x="11" y="300" width="36.8" height="1370"/></clipPath></defs>
<rect x="11" y="277" width="2849" height="1393" fill="#0a0a0a" />
<rect x="47.8" y="300" width="2812.2" height="1370" fill="#fff" />
<rect x="47.8" y="278" width="22.8" height="22" fill="#5c5c5c" />
<rect x="47.8" y="298.4" width="22.8" height="1.8" fill="#1e7145" />
<path d="M43.5 281.5 V296 H29 Z" fill="#6a6a6a" />
<line x1="70.6" y1="279" x2="70.6" y2="299.5" stroke="#5a5a5a" stroke-width="1" />
<text x="53.05" y="296" font-size="17.2" fill="#fff" textLength="11.5" lengthAdjust="spacingAndGlyphs" >A</text>
<line x1="93.6" y1="279" x2="93.6" y2="299.5" stroke="#5a5a5a" stroke-width="1" />
<text x="76.35" y="296" font-size="17.2" fill="#e8e8e8" textLength="11.5" lengthAdjust="spacingAndGlyphs" >B</text>
<line x1="212.59" y1="279" x2="212.59" y2="299.5" stroke="#5a5a5a" stroke-width="1" />
<text x="147.34" y="296" font-size="17.2" fill="#e8e8e8" textLength="11.5" lengthAdjust="spacingAndGlyphs" >C</text>
<line x1="331.58" y1="279" x2="331.58" y2="299.5" stroke="#5a5a5a" stroke-width="1" />
<text x="266.33" y="296" font-size="17.2" fill="#e8e8e8" textLength="11.5" lengthAdjust="spacingAndGlyphs" >D</text>
<line x1="450.57" y1="279" x2="450.57" y2="299.5" stroke="#5a5a5a" stroke-width="1" />
<text x="385.32" y="296" font-size="17.2" fill="#e8e8e8" textLength="11.5" lengthAdjust="spacingAndGlyphs" >E</text>
<line x1="569.56" y1="279" x2="569.56" y2="299.5" stroke="#5a5a5a" stroke-width="1" />
<text x="504.31" y="296" font-size="17.2" fill="#e8e8e8" textLength="11.5" lengthAdjust="spacingAndGlyphs" >F</text>
<line x1="688.55" y1="279" x2="688.55" y2="299.5" stroke="#5a5a5a" stroke-width="1" />
<text x="623.3" y="296" font-size="17.2" fill="#e8e8e8" textLength="11.5" lengthAdjust="spacingAndGlyphs" >G</text>
<line x1="807.54" y1="279" x2="807.54" y2="299.5" stroke="#5a5a5a" stroke-width="1" />
<text x="742.29" y="296" font-size="17.2" fill="#e8e8e8" textLength="11.5" lengthAdjust="spacingAndGlyphs" >H</text>
<line x1="926.53" y1="279" x2="926.53" y2="299.5" stroke="#5a5a5a" stroke-width="1" />
<text x="867.03" y="296" font-size="17.2" fill="#e8e8e8" text-anchor="middle" >I</text>
<line x1="1045.52" y1="279" x2="1045.52" y2="299.5" stroke="#5a5a5a" stroke-width="1" />
<text x="982.02" y="296" font-size="17.2" fill="#e8e8e8" textLength="8" lengthAdjust="spacingAndGlyphs" >J</text>
<line x1="1164.51" y1="279" x2="1164.51" y2="299.5" stroke="#5a5a5a" stroke-width="1" />
<text x="1099.26" y="296" font-size="17.2" fill="#e8e8e8" textLength="11.5" lengthAdjust="spacingAndGlyphs" >K</text>
<line x1="1283.5" y1="279" x2="1283.5" y2="299.5" stroke="#5a5a5a" stroke-width="1" />
<text x="1218.26" y="296" font-size="17.2" fill="#e8e8e8" textLength="11.5" lengthAdjust="spacingAndGlyphs" >L</text>
<line x1="1402.49" y1="279" x2="1402.49" y2="299.5" stroke="#5a5a5a" stroke-width="1" />
<text x="1335.74" y="296" font-size="17.2" fill="#e8e8e8" textLength="14.5" lengthAdjust="spacingAndGlyphs" >M</text>
<line x1="1416.49" y1="279" x2="1416.49" y2="299.5" stroke="#5a5a5a" stroke-width="1" />
<text x="1403.49" y="296" font-size="17.2" fill="#e8e8e8" textLength="12" lengthAdjust="spacingAndGlyphs" >N</text>
<line x1="1505.47" y1="279" x2="1505.47" y2="299.5" stroke="#5a5a5a" stroke-width="1" />
<text x="1455.23" y="296" font-size="17.2" fill="#e8e8e8" textLength="11.5" lengthAdjust="spacingAndGlyphs" >O</text>
<line x1="1594.45" y1="279" x2="1594.45" y2="299.5" stroke="#5a5a5a" stroke-width="1" />
<text x="1544.21" y="296" font-size="17.2" fill="#e8e8e8" textLength="11.5" lengthAdjust="spacingAndGlyphs" >P</text>
<line x1="1683.43" y1="279" x2="1683.43" y2="299.5" stroke="#5a5a5a" stroke-width="1" />
<text x="1633.19" y="296" font-size="17.2" fill="#e8e8e8" textLength="11.5" lengthAdjust="spacingAndGlyphs" >Q</text>
<line x1="1772.41" y1="279" x2="1772.41" y2="299.5" stroke="#5a5a5a" stroke-width="1" />
<text x="1722.17" y="296" font-size="17.2" fill="#e8e8e8" textLength="11.5" lengthAdjust="spacingAndGlyphs" >R</text>
<line x1="1861.39" y1="279" x2="1861.39" y2="299.5" stroke="#5a5a5a" stroke-width="1" />
<text x="1811.15" y="296" font-size="17.2" fill="#e8e8e8" textLength="11.5" lengthAdjust="spacingAndGlyphs" >S</text>
<line x1="1950.37" y1="279" x2="1950.37" y2="299.5" stroke="#5a5a5a" stroke-width="1" />
<text x="1900.13" y="296" font-size="17.2" fill="#e8e8e8" textLength="11.5" lengthAdjust="spacingAndGlyphs" >T</text>
<line x1="2039.35" y1="279" x2="2039.35" y2="299.5" stroke="#5a5a5a" stroke-width="1" />
<text x="1989.11" y="296" font-size="17.2" fill="#e8e8e8" textLength="11.5" lengthAdjust="spacingAndGlyphs" >U</text>
<line x1="2128.33" y1="279" x2="2128.33" y2="299.5" stroke="#5a5a5a" stroke-width="1" />
<text x="2078.09" y="296" font-size="17.2" fill="#e8e8e8" textLength="11.5" lengthAdjust="spacingAndGlyphs" >V</text>
<line x1="2217.31" y1="279" x2="2217.31" y2="299.5" stroke="#5a5a5a" stroke-width="1" />
<text x="2165.57" y="296" font-size="17.2" fill="#e8e8e8" textLength="14.5" lengthAdjust="spacingAndGlyphs" >W</text>
<line x1="2306.29" y1="279" x2="2306.29" y2="299.5" stroke="#5a5a5a" stroke-width="1" />
<text x="2256.05" y="296" font-size="17.2" fill="#e8e8e8" textLength="11.5" lengthAdjust="spacingAndGlyphs" >X</text>
<line x1="2395.27" y1="279" x2="2395.27" y2="299.5" stroke="#5a5a5a" stroke-width="1" />
<text x="2345.03" y="296" font-size="17.2" fill="#e8e8e8" textLength="11.5" lengthAdjust="spacingAndGlyphs" >Y</text>
<line x1="2484.25" y1="279" x2="2484.25" y2="299.5" stroke="#5a5a5a" stroke-width="1" />
<text x="2434.01" y="296" font-size="17.2" fill="#e8e8e8" textLength="11.5" lengthAdjust="spacingAndGlyphs" >Z</text>
<line x1="2573.23" y1="279" x2="2573.23" y2="299.5" stroke="#5a5a5a" stroke-width="1" />
<text x="2517.49" y="296" font-size="17.2" fill="#e8e8e8" textLength="22.5" lengthAdjust="spacingAndGlyphs" >AA</text>
<line x1="2662.21" y1="279" x2="2662.21" y2="299.5" stroke="#5a5a5a" stroke-width="1" />
<text x="2606.47" y="296" font-size="17.2" fill="#e8e8e8" textLength="22.5" lengthAdjust="spacingAndGlyphs" >AB</text>
<line x1="2751.19" y1="279" x2="2751.19" y2="299.5" stroke="#5a5a5a" stroke-width="1" />
<text x="2695.45" y="296" font-size="17.2" fill="#e8e8e8" textLength="22.5" lengthAdjust="spacingAndGlyphs" >AC</text>
<line x1="2840.17" y1="279" x2="2840.17" y2="299.5" stroke="#5a5a5a" stroke-width="1" />
<text x="2784.43" y="296" font-size="17.2" fill="#e8e8e8" textLength="22.5" lengthAdjust="spacingAndGlyphs" >AD</text>
<rect x="11" y="300.5" width="36.8" height="34.2" fill="#6b6b6b" />
<rect x="46.2" y="300.5" width="1.8" height="34.2" fill="#1e7145" />
<g clip-path="url(#rowclip)">
<line x1="11" y1="334.7" x2="47.8" y2="334.7" stroke="#5a5a5a" stroke-width="1" />
<text x="24.5" y="330.5" font-size="18.8" fill="#fff" textLength="9.4" lengthAdjust="spacingAndGlyphs" >1</text>
<line x1="11" y1="366.5" x2="47.8" y2="366.5" stroke="#5a5a5a" stroke-width="1" />
<text x="24.5" y="362.9" font-size="18.8" fill="#e8e8e8" textLength="9.4" lengthAdjust="spacingAndGlyphs" >2</text>
<line x1="11" y1="398.6" x2="47.8" y2="398.6" stroke="#5a5a5a" stroke-width="1" />
<text x="24.5" y="395" font-size="18.8" fill="#e8e8e8" textLength="9.4" lengthAdjust="spacingAndGlyphs" >3</text>
<line x1="11" y1="421.5" x2="47.8" y2="421.5" stroke="#5a5a5a" stroke-width="1" />
<text x="24.5" y="417.9" font-size="18.8" fill="#e8e8e8" textLength="9.4" lengthAdjust="spacingAndGlyphs" >4</text>
<line x1="11" y1="454.5" x2="47.8" y2="454.5" stroke="#5a5a5a" stroke-width="1" />
<text x="24.5" y="447.9" font-size="18.8" fill="#e8e8e8" textLength="9.4" lengthAdjust="spacingAndGlyphs" >5</text>
<line x1="11" y1="485.5" x2="47.8" y2="485.5" stroke="#5a5a5a" stroke-width="1" />
<text x="24.5" y="481.9" font-size="18.8" fill="#e8e8e8" textLength="9.4" lengthAdjust="spacingAndGlyphs" >6</text>
<line x1="11" y1="516.5" x2="47.8" y2="516.5" stroke="#5a5a5a" stroke-width="1" />
<text x="24.5" y="512.9" font-size="18.8" fill="#e8e8e8" textLength="9.4" lengthAdjust="spacingAndGlyphs" >7</text>
<line x1="11" y1="547.5" x2="47.8" y2="547.5" stroke="#5a5a5a" stroke-width="1" />
<text x="24.5" y="543.9" font-size="18.8" fill="#e8e8e8" textLength="9.4" lengthAdjust="spacingAndGlyphs" >8</text>
<line x1="11" y1="578.5" x2="47.8" y2="578.5" stroke="#5a5a5a" stroke-width="1" />
<text x="24.5" y="574.9" font-size="18.8" fill="#e8e8e8" textLength="9.4" lengthAdjust="spacingAndGlyphs" >9</text>
<line x1="11" y1="609.5" x2="47.8" y2="609.5" stroke="#5a5a5a" stroke-width="1" />
<text x="19.8" y="605.9" font-size="18.8" fill="#e8e8e8" textLength="18.8" lengthAdjust="spacingAndGlyphs" >10</text>
<line x1="11" y1="640.5" x2="47.8" y2="640.5" stroke="#5a5a5a" stroke-width="1" />
<text x="19.8" y="636.9" font-size="18.8" fill="#e8e8e8" textLength="18.8" lengthAdjust="spacingAndGlyphs" >11</text>
<line x1="11" y1="671.5" x2="47.8" y2="671.5" stroke="#5a5a5a" stroke-width="1" />
<text x="19.8" y="667.9" font-size="18.8" fill="#e8e8e8" textLength="18.8" lengthAdjust="spacingAndGlyphs" >12</text>
<line x1="11" y1="702.5" x2="47.8" y2="702.5" stroke="#5a5a5a" stroke-width="1" />
<text x="19.8" y="698.9" font-size="18.8" fill="#e8e8e8" textLength="18.8" lengthAdjust="spacingAndGlyphs" >13</text>
<line x1="11" y1="733.5" x2="47.8" y2="733.5" stroke="#5a5a5a" stroke-width="1" />
<text x="19.8" y="729.9" font-size="18.8" fill="#e8e8e8" textLength="18.8" lengthAdjust="spacingAndGlyphs" >14</text>
<line x1="11" y1="764.5" x2="47.8" y2="764.5" stroke="#5a5a5a" stroke-width="1" />
<text x="19.8" y="760.9" font-size="18.8" fill="#e8e8e8" textLength="18.8" lengthAdjust="spacingAndGlyphs" >15</text>
<line x1="11" y1="795.5" x2="47.8" y2="795.5" stroke="#5a5a5a" stroke-width="1" />
<text x="19.8" y="791.9" font-size="18.8" fill="#e8e8e8" textLength="18.8" lengthAdjust="spacingAndGlyphs" >16</text>
<line x1="11" y1="826.5" x2="47.8" y2="826.5" stroke="#5a5a5a" stroke-width="1" />
<text x="19.8" y="822.9" font-size="18.8" fill="#e8e8e8" textLength="18.8" lengthAdjust="spacingAndGlyphs" >17</text>
<line x1="11" y1="857.5" x2="47.8" y2="857.5" stroke="#5a5a5a" stroke-width="1" />
<text x="19.8" y="853.9" font-size="18.8" fill="#e8e8e8" textLength="18.8" lengthAdjust="spacingAndGlyphs" >18</text>
<line x1="11" y1="888.5" x2="47.8" y2="888.5" stroke="#5a5a5a" stroke-width="1" />
<text x="19.8" y="884.9" font-size="18.8" fill="#e8e8e8" textLength="18.8" lengthAdjust="spacingAndGlyphs" >19</text>
<line x1="11" y1="919.5" x2="47.8" y2="919.5" stroke="#5a5a5a" stroke-width="1" />
<text x="19.8" y="915.9" font-size="18.8" fill="#e8e8e8" textLength="18.8" lengthAdjust="spacingAndGlyphs" >20</text>
<line x1="11" y1="950.5" x2="47.8" y2="950.5" stroke="#5a5a5a" stroke-width="1" />
<text x="19.8" y="946.9" font-size="18.8" fill="#e8e8e8" textLength="18.8" lengthAdjust="spacingAndGlyphs" >21</text>
<line x1="11" y1="981.5" x2="47.8" y2="981.5" stroke="#5a5a5a" stroke-width="1" />
<text x="19.8" y="977.9" font-size="18.8" fill="#e8e8e8" textLength="18.8" lengthAdjust="spacingAndGlyphs" >22</text>
<line x1="11" y1="1012.5" x2="47.8" y2="1012.5" stroke="#5a5a5a" stroke-width="1" />
<text x="19.8" y="1008.9" font-size="18.8" fill="#e8e8e8" textLength="18.8" lengthAdjust="spacingAndGlyphs" >23</text>
<line x1="11" y1="1043.5" x2="47.8" y2="1043.5" stroke="#5a5a5a" stroke-width="1" />
<text x="19.8" y="1039.9" font-size="18.8" fill="#e8e8e8" textLength="18.8" lengthAdjust="spacingAndGlyphs" >24</text>
<line x1="11" y1="1054.5" x2="47.8" y2="1054.5" stroke="#5a5a5a" stroke-width="1" />
<clipPath id="rc25"><rect x="11" y="1044" width="36.8" height="10.5"/></clipPath>
<g clip-path="url(#rc25)">
<text x="19.8" y="1050.9" font-size="18.8" fill="#e8e8e8" textLength="18.8" lengthAdjust="spacingAndGlyphs" >25</text>
</g>
<line x1="11" y1="1085.5" x2="47.8" y2="1085.5" stroke="#5a5a5a" stroke-width="1" />
<text x="19.8" y="1081.9" font-size="18.8" fill="#e8e8e8" textLength="18.8" lengthAdjust="spacingAndGlyphs" >26</text>
<line x1="11" y1="1116.5" x2="47.8" y2="1116.5" stroke="#5a5a5a" stroke-width="1" />
<text x="19.8" y="1112.9" font-size="18.8" fill="#e8e8e8" textLength="18.8" lengthAdjust="spacingAndGlyphs" >27</text>
<line x1="11" y1="1147.5" x2="47.8" y2="1147.5" stroke="#5a5a5a" stroke-width="1" />
<text x="19.8" y="1143.9" font-size="18.8" fill="#e8e8e8" textLength="18.8" lengthAdjust="spacingAndGlyphs" >28</text>
<line x1="11" y1="1178.5" x2="47.8" y2="1178.5" stroke="#5a5a5a" stroke-width="1" />
<text x="19.8" y="1174.9" font-size="18.8" fill="#e8e8e8" textLength="18.8" lengthAdjust="spacingAndGlyphs" >29</text>
<line x1="11" y1="1209.5" x2="47.8" y2="1209.5" stroke="#5a5a5a" stroke-width="1" />
<text x="19.8" y="1205.9" font-size="18.8" fill="#e8e8e8" textLength="18.8" lengthAdjust="spacingAndGlyphs" >30</text>
<line x1="11" y1="1240.5" x2="47.8" y2="1240.5" stroke="#5a5a5a" stroke-width="1" />
<text x="19.8" y="1236.9" font-size="18.8" fill="#e8e8e8" textLength="18.8" lengthAdjust="spacingAndGlyphs" >31</text>
<line x1="11" y1="1271.5" x2="47.8" y2="1271.5" stroke="#5a5a5a" stroke-width="1" />
<text x="19.8" y="1267.9" font-size="18.8" fill="#e8e8e8" textLength="18.8" lengthAdjust="spacingAndGlyphs" >32</text>
<line x1="11" y1="1302.5" x2="47.8" y2="1302.5" stroke="#5a5a5a" stroke-width="1" />
<text x="19.8" y="1298.9" font-size="18.8" fill="#e8e8e8" textLength="18.8" lengthAdjust="spacingAndGlyphs" >33</text>
<line x1="11" y1="1333.5" x2="47.8" y2="1333.5" stroke="#5a5a5a" stroke-width="1" />
<text x="19.8" y="1329.9" font-size="18.8" fill="#e8e8e8" textLength="18.8" lengthAdjust="spacingAndGlyphs" >34</text>
<line x1="11" y1="1364.5" x2="47.8" y2="1364.5" stroke="#5a5a5a" stroke-width="1" />
<text x="19.8" y="1360.9" font-size="18.8" fill="#e8e8e8" textLength="18.8" lengthAdjust="spacingAndGlyphs" >35</text>
<line x1="11" y1="1395.5" x2="47.8" y2="1395.5" stroke="#5a5a5a" stroke-width="1" />
<text x="19.8" y="1391.9" font-size="18.8" fill="#e8e8e8" textLength="18.8" lengthAdjust="spacingAndGlyphs" >36</text>
<line x1="11" y1="1426.5" x2="47.8" y2="1426.5" stroke="#5a5a5a" stroke-width="1" />
<text x="19.8" y="1422.9" font-size="18.8" fill="#e8e8e8" textLength="18.8" lengthAdjust="spacingAndGlyphs" >37</text>
<line x1="11" y1="1457.5" x2="47.8" y2="1457.5" stroke="#5a5a5a" stroke-width="1" />
<text x="19.8" y="1453.9" font-size="18.8" fill="#e8e8e8" textLength="18.8" lengthAdjust="spacingAndGlyphs" >38</text>
<line x1="11" y1="1488.5" x2="47.8" y2="1488.5" stroke="#5a5a5a" stroke-width="1" />
<text x="19.8" y="1484.9" font-size="18.8" fill="#e8e8e8" textLength="18.8" lengthAdjust="spacingAndGlyphs" >39</text>
<line x1="11" y1="1519.5" x2="47.8" y2="1519.5" stroke="#5a5a5a" stroke-width="1" />
<text x="19.8" y="1515.9" font-size="18.8" fill="#e8e8e8" textLength="18.8" lengthAdjust="spacingAndGlyphs" >40</text>
<line x1="11" y1="1550.5" x2="47.8" y2="1550.5" stroke="#5a5a5a" stroke-width="1" />
<text x="19.8" y="1546.9" font-size="18.8" fill="#e8e8e8" textLength="18.8" lengthAdjust="spacingAndGlyphs" >41</text>
<line x1="11" y1="1581.5" x2="47.8" y2="1581.5" stroke="#5a5a5a" stroke-width="1" />
<text x="19.8" y="1577.9" font-size="18.8" fill="#e8e8e8" textLength="18.8" lengthAdjust="spacingAndGlyphs" >42</text>
<line x1="11" y1="1612.5" x2="47.8" y2="1612.5" stroke="#5a5a5a" stroke-width="1" />
<text x="19.8" y="1608.9" font-size="18.8" fill="#e8e8e8" textLength="18.8" lengthAdjust="spacingAndGlyphs" >43</text>
<line x1="11" y1="1643.5" x2="47.8" y2="1643.5" stroke="#5a5a5a" stroke-width="1" />
<text x="19.8" y="1639.9" font-size="18.8" fill="#e8e8e8" textLength="18.8" lengthAdjust="spacingAndGlyphs" >44</text>
<line x1="11" y1="1654" x2="47.8" y2="1654" stroke="#5a5a5a" stroke-width="1" />
<clipPath id="rc45"><rect x="11" y="1644" width="36.8" height="10"/></clipPath>
<g clip-path="url(#rc45)">
<text x="19.8" y="1650.4" font-size="18.8" fill="#e8e8e8" textLength="18.8" lengthAdjust="spacingAndGlyphs" >45</text>
</g>
<line x1="11" y1="1685" x2="47.8" y2="1685" stroke="#5a5a5a" stroke-width="1" />
<text x="19.8" y="1681.4" font-size="18.8" fill="#e8e8e8" textLength="18.8" lengthAdjust="spacingAndGlyphs" >46</text>
</g>
<text x="76" y="329.3" font-size="31.5" fill="#222" font-weight="700" textLength="251" lengthAdjust="spacingAndGlyphs" style="stroke:#222;stroke-width:0.7px" >Financial Charts</text>
<text x="76" y="360.8" font-size="26" fill="#000" font-weight="700" textLength="243" lengthAdjust="spacingAndGlyphs" style="stroke:#000;stroke-width:0.6px" >ABC Company Inc.</text>
<text x="74" y="388.6" font-size="19" fill="#2f73ea" font-weight="700" textLength="210" lengthAdjust="spacingAndGlyphs" style="stroke:#2f73ea;stroke-width:0.3px" >Go to Table of Contents</text>
<rect x="74" y="391.2" width="210" height="1.6" fill="#2f73ea" />
<rect x="70.2" y="421" width="1332.29" height="33.5" fill="#4b4fd1" />
<rect x="1416.49" y="421" width="1424.28" height="33.5" fill="#4b4fd1" />
<line x1="47" y1="454.8" x2="2860" y2="454.8" stroke="#8c8c8c" stroke-width="1" />
<text x="689" y="447.3" font-size="26" fill="#fff" font-weight="700" textLength="95" lengthAdjust="spacingAndGlyphs" style="stroke:#fff;stroke-width:0.6px" >5 years</text>
<text x="2058" y="447.3" font-size="26" fill="#fff" font-weight="700" textLength="141" lengthAdjust="spacingAndGlyphs" style="stroke:#fff;stroke-width:0.6px" >60 months</text>
<rect x="1402.09" y="421" width="14.9" height="1249" fill="#bfbfbf" />
<rect x="93.6" y="1043.2" width="2747.17" height="11.5" fill="#bfbfbf" />
<rect x="93.6" y="1643.2" width="2747.17" height="11.5" fill="#bfbfbf" />
<text x="325" y="496" font-size="33.5" fill="#000" font-weight="700" textLength="549" lengthAdjust="spacingAndGlyphs" style="stroke:#000;stroke-width:0.9px" >REVENUE BREAKDOWN - $'000</text>
<rect x="147" y="536.2" width="10" height="10" fill="#4bb2e7" />
<text x="160.5" y="547.5" font-size="18.3" fill="#000" textLength="85" lengthAdjust="spacingAndGlyphs" >Pho Dishes</text>
<rect x="318" y="536.2" width="10" height="10" fill="#4f52d3" />
<text x="331.5" y="547.5" font-size="18.3" fill="#000" textLength="108.5" lengthAdjust="spacingAndGlyphs" >Other Entrees</text>
<rect x="512" y="536.2" width="10" height="10" fill="#f07c72" />
<text x="525.5" y="547.5" font-size="18.3" fill="#000" textLength="80" lengthAdjust="spacingAndGlyphs" >Beverages</text>
<rect x="677" y="536.2" width="10" height="10" fill="#f5b301" />
<text x="690.5" y="547.5" font-size="18.3" fill="#000" textLength="66.5" lengthAdjust="spacingAndGlyphs" >Desserts</text>
<rect x="831" y="536.2" width="10" height="10" fill="#2ab5a5" />
<rect x="844.5" y="541" width="5.2" height="1.7" fill="#000" />
<rect x="923.5" y="536.2" width="10" height="10" fill="#69a23f" />
<rect x="937" y="541" width="5.2" height="1.7" fill="#000" />
<rect x="1016" y="536.2" width="10" height="10" fill="#8fa6d9" />
<rect x="1029.5" y="541" width="5.2" height="1.7" fill="#000" />
<rect x="1108.5" y="536.2" width="10" height="10" fill="#f0a583" />
<rect x="1122" y="541" width="5.2" height="1.7" fill="#000" />
<rect x="1201" y="536.2" width="10" height="10" fill="#c4c4c4" />
<rect x="1214.5" y="541" width="5.2" height="1.7" fill="#000" />
<rect x="1293.5" y="536.2" width="10" height="10" fill="#fdd07a" />
<rect x="1307" y="541" width="5.2" height="1.7" fill="#000" />
<line x1="199" y1="920.5" x2="1320" y2="920.5" stroke="#5fa3cc" stroke-width="1" />
<line x1="199" y1="886.5" x2="1320" y2="886.5" stroke="#5fa3cc" stroke-width="1" />
<line x1="199" y1="852.5" x2="1320" y2="852.5" stroke="#5fa3cc" stroke-width="1" />
<line x1="199" y1="818.5" x2="1320" y2="818.5" stroke="#5fa3cc" stroke-width="1" />
<line x1="199" y1="784.5" x2="1320" y2="784.5" stroke="#5fa3cc" stroke-width="1" />
<line x1="199" y1="750.5" x2="1320" y2="750.5" stroke="#5fa3cc" stroke-width="1" />
<line x1="199" y1="715.5" x2="1320" y2="715.5" stroke="#5fa3cc" stroke-width="1" />
<line x1="199" y1="681.5" x2="1320" y2="681.5" stroke="#5fa3cc" stroke-width="1" />
<line x1="199" y1="647.5" x2="1320" y2="647.5" stroke="#5fa3cc" stroke-width="1" />
<line x1="199" y1="613.5" x2="1320" y2="613.5" stroke="#5fa3cc" stroke-width="1" />
<rect x="155.5" y="954.8" width="6.5" height="2.6" fill="#000" />
<text x="137.5" y="928.15" font-size="21.2" fill="#000" font-weight="700" textLength="37" lengthAdjust="spacingAndGlyphs" style="stroke:#000;stroke-width:0.7px" >200</text>
<text x="137.5" y="894" font-size="21.2" fill="#000" font-weight="700" textLength="37" lengthAdjust="spacingAndGlyphs" style="stroke:#000;stroke-width:0.7px" >400</text>
<text x="137.5" y="859.85" font-size="21.2" fill="#000" font-weight="700" textLength="37" lengthAdjust="spacingAndGlyphs" style="stroke:#000;stroke-width:0.7px" >600</text>
<text x="137.5" y="825.7" font-size="21.2" fill="#000" font-weight="700" textLength="37" lengthAdjust="spacingAndGlyphs" style="stroke:#000;stroke-width:0.7px" >800</text>
<text x="119" y="791.55" font-size="21.2" fill="#000" font-weight="700" textLength="55.5" lengthAdjust="spacingAndGlyphs" style="stroke:#000;stroke-width:0.7px" >1,000</text>
<text x="119" y="757.4" font-size="21.2" fill="#000" font-weight="700" textLength="55.5" lengthAdjust="spacingAndGlyphs" style="stroke:#000;stroke-width:0.7px" >1,200</text>
<text x="119" y="723.25" font-size="21.2" fill="#000" font-weight="700" textLength="55.5" lengthAdjust="spacingAndGlyphs" style="stroke:#000;stroke-width:0.7px" >1,400</text>
<text x="119" y="689.1" font-size="21.2" fill="#000" font-weight="700" textLength="55.5" lengthAdjust="spacingAndGlyphs" style="stroke:#000;stroke-width:0.7px" >1,600</text>
<text x="119" y="654.95" font-size="21.2" fill="#000" font-weight="700" textLength="55.5" lengthAdjust="spacingAndGlyphs" style="stroke:#000;stroke-width:0.7px" >1,800</text>
<text x="119" y="620.8" font-size="21.2" fill="#000" font-weight="700" textLength="55.5" lengthAdjust="spacingAndGlyphs" style="stroke:#000;stroke-width:0.7px" >2,000</text>
<rect x="241.1" y="854.09" width="140" height="100.91" fill="#4bb2e7" />
<rect x="241.1" y="830.69" width="140" height="23.69" fill="#4f52d3" />
<rect x="241.1" y="807.3" width="140" height="23.69" fill="#f07c72" />
<rect x="241.1" y="799.96" width="140" height="7.64" fill="#f5b301" />
<text x="286.1" y="1008" font-size="21.2" fill="#000" font-weight="700" textLength="50" lengthAdjust="spacingAndGlyphs" style="stroke:#000;stroke-width:0.7px" >2026</text>
<rect x="465.3" y="821.64" width="140" height="133.36" fill="#4bb2e7" />
<rect x="465.3" y="790.91" width="140" height="31.04" fill="#4f52d3" />
<rect x="465.3" y="759.83" width="140" height="31.38" fill="#f07c72" />
<rect x="465.3" y="750.1" width="140" height="10.03" fill="#f5b301" />
<text x="510.3" y="1008" font-size="21.2" fill="#000" font-weight="700" textLength="50" lengthAdjust="spacingAndGlyphs" style="stroke:#000;stroke-width:0.7px" >2027</text>
<rect x="689.5" y="796.54" width="140" height="158.46" fill="#4bb2e7" />
<rect x="689.5" y="759.83" width="140" height="37.01" fill="#4f52d3" />
<rect x="689.5" y="724.49" width="140" height="35.65" fill="#f07c72" />
<rect x="689.5" y="712.02" width="140" height="12.76" fill="#f5b301" />
<text x="734.5" y="1008" font-size="21.2" fill="#000" font-weight="700" textLength="50" lengthAdjust="spacingAndGlyphs" style="stroke:#000;stroke-width:0.7px" >2028</text>
<rect x="913.7" y="771.61" width="140" height="183.39" fill="#4bb2e7" />
<rect x="913.7" y="729.78" width="140" height="42.13" fill="#4f52d3" />
<rect x="913.7" y="687.09" width="140" height="42.99" fill="#f07c72" />
<rect x="913.7" y="672.92" width="140" height="14.47" fill="#f5b301" />
<text x="958.7" y="1008" font-size="21.2" fill="#000" font-weight="700" textLength="50" lengthAdjust="spacingAndGlyphs" style="stroke:#000;stroke-width:0.7px" >2029</text>
<rect x="1137.9" y="745.83" width="140" height="209.17" fill="#4bb2e7" />
<rect x="1137.9" y="697" width="140" height="49.13" fill="#4f52d3" />
<rect x="1137.9" y="649.19" width="140" height="48.11" fill="#f07c72" />
<rect x="1137.9" y="632.97" width="140" height="16.52" fill="#f5b301" />
<text x="1182.9" y="1008" font-size="21.2" fill="#000" font-weight="700" textLength="50" lengthAdjust="spacingAndGlyphs" style="stroke:#000;stroke-width:0.7px" >2030</text>
<line x1="199" y1="955" x2="1320" y2="955" stroke="#4ea5da" stroke-width="2.2" />
<text x="1824" y="494.5" font-size="33.5" fill="#000" font-weight="700" textLength="549" lengthAdjust="spacingAndGlyphs" style="stroke:#000;stroke-width:0.9px" >REVENUE BREAKDOWN - $'000</text>
<rect x="1492.8" y="526.2" width="10" height="10" fill="#4bb2e7" />
<text x="1506.8" y="537.5" font-size="18.3" fill="#000" textLength="85" lengthAdjust="spacingAndGlyphs" >Pho Dishes</text>
<rect x="1658" y="526.2" width="10" height="10" fill="#4f52d3" />
<text x="1671.5" y="537.5" font-size="18.3" fill="#000" textLength="108.5" lengthAdjust="spacingAndGlyphs" >Other Entrees</text>
<rect x="1845" y="526.2" width="10" height="10" fill="#f07c72" />
<text x="1858.8" y="537.5" font-size="18.3" fill="#000" textLength="80" lengthAdjust="spacingAndGlyphs" >Beverages</text>
<rect x="2004.8" y="526.2" width="10" height="10" fill="#f5b301" />
<text x="2018.4" y="537.5" font-size="18.3" fill="#000" textLength="66.5" lengthAdjust="spacingAndGlyphs" >Desserts</text>
<rect x="2150" y="526.2" width="10" height="10" fill="#2ab5a5" />
<rect x="2164" y="531" width="5.2" height="1.7" fill="#000" />
<rect x="2236" y="526.2" width="10" height="10" fill="#69a23f" />
<rect x="2250" y="531" width="5.2" height="1.7" fill="#000" />
<rect x="2322" y="526.2" width="10" height="10" fill="#8fa6d9" />
<rect x="2336" y="531" width="5.2" height="1.7" fill="#000" />
<rect x="2408" y="526.2" width="10" height="10" fill="#f0a583" />
<rect x="2422" y="531" width="5.2" height="1.7" fill="#000" />
<rect x="2494" y="526.2" width="10" height="10" fill="#c4c4c4" />
<rect x="2507.5" y="531" width="5.2" height="1.7" fill="#000" />
<rect x="2580" y="526.2" width="10" height="10" fill="#fdd07a" />
<rect x="2593.5" y="531" width="5.2" height="1.7" fill="#000" />
<line x1="1519" y1="915.5" x2="2792" y2="915.5" stroke="#5fa3cc" stroke-width="1" />
<line x1="1519" y1="877.5" x2="2792" y2="877.5" stroke="#5fa3cc" stroke-width="1" />
<line x1="1519" y1="839.5" x2="2792" y2="839.5" stroke="#5fa3cc" stroke-width="1" />
<line x1="1519" y1="801.5" x2="2792" y2="801.5" stroke="#5fa3cc" stroke-width="1" />
<line x1="1519" y1="763.5" x2="2792" y2="763.5" stroke="#5fa3cc" stroke-width="1" />
<line x1="1519" y1="725.5" x2="2792" y2="725.5" stroke="#5fa3cc" stroke-width="1" />
<line x1="1519" y1="687.5" x2="2792" y2="687.5" stroke="#5fa3cc" stroke-width="1" />
<line x1="1519" y1="649.5" x2="2792" y2="649.5" stroke="#5fa3cc" stroke-width="1" />
<line x1="1519" y1="612.5" x2="2792" y2="612.5" stroke="#5fa3cc" stroke-width="1" />
<rect x="1475.5" y="953.6" width="6.5" height="2.6" fill="#000" />
<text x="1470" y="923.12" font-size="21.2" fill="#000" font-weight="700" textLength="24.5" lengthAdjust="spacingAndGlyphs" style="stroke:#000;stroke-width:0.7px" >20</text>
<text x="1470" y="885.14" font-size="21.2" fill="#000" font-weight="700" textLength="24.5" lengthAdjust="spacingAndGlyphs" style="stroke:#000;stroke-width:0.7px" >40</text>
<text x="1470" y="847.17" font-size="21.2" fill="#000" font-weight="700" textLength="24.5" lengthAdjust="spacingAndGlyphs" style="stroke:#000;stroke-width:0.7px" >60</text>
<text x="1470" y="809.19" font-size="21.2" fill="#000" font-weight="700" textLength="24.5" lengthAdjust="spacingAndGlyphs" style="stroke:#000;stroke-width:0.7px" >80</text>
<text x="1457.5" y="771.21" font-size="21.2" fill="#000" font-weight="700" textLength="37" lengthAdjust="spacingAndGlyphs" style="stroke:#000;stroke-width:0.7px" >100</text>
<text x="1457.5" y="733.23" font-size="21.2" fill="#000" font-weight="700" textLength="37" lengthAdjust="spacingAndGlyphs" style="stroke:#000;stroke-width:0.7px" >120</text>
<text x="1457.5" y="695.26" font-size="21.2" fill="#000" font-weight="700" textLength="37" lengthAdjust="spacingAndGlyphs" style="stroke:#000;stroke-width:0.7px" >140</text>
<text x="1457.5" y="657.28" font-size="21.2" fill="#000" font-weight="700" textLength="37" lengthAdjust="spacingAndGlyphs" style="stroke:#000;stroke-width:0.7px" >160</text>
<text x="1457.5" y="619.3" font-size="21.2" fill="#000" font-weight="700" textLength="37" lengthAdjust="spacingAndGlyphs" style="stroke:#000;stroke-width:0.7px" >180</text>
<path d="M1519 953.8 L1519 899.68 L1540.58 856.39 L1562.15 795.43 L1583.73 799.23 L1605.31 783.85 L1626.88 798.66 L1648.46 790.88 L1670.03 786.51 L1691.61 801.7 L1713.19 792.01 L1734.76 804.55 L1756.34 808.16 L1777.92 764.48 L1799.49 786.51 L1821.07 764.86 L1842.64 764.48 L1864.22 751 L1885.8 763.15 L1907.37 749.29 L1928.95 755.94 L1950.53 766 L1972.1 754.04 L1993.68 776.44 L2015.25 774.54 L2036.83 732.96 L2058.41 751 L2079.98 725.17 L2101.56 720.43 L2123.14 725.17 L2144.71 724.41 L2166.29 711.5 L2187.86 724.41 L2209.44 725.17 L2231.02 727.64 L2252.59 742.07 L2274.17 731.25 L2295.75 708.84 L2317.32 724.03 L2338.9 680.55 L2360.47 690.23 L2382.05 686.63 L2403.63 679.41 L2425.2 679.03 L2446.78 681.88 L2468.36 684.73 L2489.93 694.41 L2511.51 703.91 L2533.08 698.21 L2554.66 671.44 L2576.24 689.85 L2597.81 636.12 L2619.39 658.9 L2640.97 644.47 L2662.54 637.26 L2684.12 645.8 L2705.69 635.36 L2727.27 655.86 L2748.85 656.24 L2770.42 661.37 L2792 670.3 L2792 953.8 Z" fill="#f5b301" />
<path d="M1519 953.8 L1519 902.39 L1540.58 861.26 L1562.15 803.35 L1583.73 806.96 L1605.31 792.35 L1626.88 806.42 L1648.46 799.02 L1670.03 794.87 L1691.61 809.3 L1713.19 800.1 L1734.76 812.01 L1756.34 815.44 L1777.92 773.95 L1799.49 794.87 L1821.07 774.31 L1842.64 773.95 L1864.22 761.14 L1885.8 772.68 L1907.37 759.52 L1928.95 765.83 L1950.53 775.39 L1972.1 764.03 L1993.68 785.31 L2015.25 783.51 L2036.83 744 L2058.41 761.14 L2079.98 736.61 L2101.56 732.1 L2123.14 736.61 L2144.71 735.88 L2166.29 723.62 L2187.86 735.88 L2209.44 736.61 L2231.02 738.95 L2252.59 752.66 L2274.17 742.38 L2295.75 721.09 L2317.32 735.52 L2338.9 694.21 L2360.47 703.41 L2382.05 699.99 L2403.63 693.13 L2425.2 692.77 L2446.78 695.48 L2468.36 698.18 L2489.93 707.38 L2511.51 716.4 L2533.08 710.99 L2554.66 685.55 L2576.24 703.05 L2597.81 652 L2619.39 673.65 L2640.97 659.94 L2662.54 653.08 L2684.12 661.2 L2705.69 651.28 L2727.27 670.76 L2748.85 671.12 L2770.42 675.99 L2792 684.47 L2792 953.8 Z" fill="#f07c72" />
<path d="M1519 953.8 L1519 910.4 L1540.58 875.67 L1562.15 826.79 L1583.73 829.84 L1605.31 817.5 L1626.88 829.38 L1648.46 823.13 L1670.03 819.63 L1691.61 831.81 L1713.19 824.05 L1734.76 834.1 L1756.34 836.99 L1777.92 801.97 L1799.49 819.63 L1821.07 802.27 L1842.64 801.97 L1864.22 791.15 L1885.8 800.9 L1907.37 789.78 L1928.95 795.11 L1950.53 803.18 L1972.1 793.59 L1993.68 811.56 L2015.25 810.04 L2036.83 776.69 L2058.41 791.15 L2079.98 770.44 L2101.56 766.63 L2123.14 770.44 L2144.71 769.83 L2166.29 759.48 L2187.86 769.83 L2209.44 770.44 L2231.02 772.42 L2252.59 784 L2274.17 775.32 L2295.75 757.34 L2317.32 769.53 L2338.9 734.65 L2360.47 742.42 L2382.05 739.53 L2403.63 733.74 L2425.2 733.44 L2446.78 735.72 L2468.36 738 L2489.93 745.77 L2511.51 753.39 L2533.08 748.82 L2554.66 727.34 L2576.24 742.12 L2597.81 699.02 L2619.39 717.29 L2640.97 705.72 L2662.54 699.93 L2684.12 706.78 L2705.69 698.41 L2727.27 714.86 L2748.85 715.16 L2770.42 719.27 L2792 726.43 L2792 953.8 Z" fill="#4f52d3" />
<path d="M1519 953.8 L1519 918.46 L1540.58 890.19 L1562.15 850.39 L1583.73 852.87 L1605.31 842.82 L1626.88 852.49 L1648.46 847.41 L1670.03 844.56 L1691.61 854.48 L1713.19 848.15 L1734.76 856.34 L1756.34 858.69 L1777.92 830.17 L1799.49 844.56 L1821.07 830.42 L1842.64 830.17 L1864.22 821.37 L1885.8 829.31 L1907.37 820.25 L1928.95 824.59 L1950.53 831.17 L1972.1 823.35 L1993.68 837.99 L2015.25 836.75 L2036.83 809.59 L2058.41 821.37 L2079.98 804.51 L2101.56 801.41 L2123.14 804.51 L2144.71 804.01 L2166.29 795.58 L2187.86 804.01 L2209.44 804.51 L2231.02 806.12 L2252.59 815.54 L2274.17 808.47 L2295.75 793.84 L2317.32 803.76 L2338.9 775.37 L2360.47 781.69 L2382.05 779.34 L2403.63 774.62 L2425.2 774.38 L2446.78 776.24 L2468.36 778.1 L2489.93 784.42 L2511.51 790.62 L2533.08 786.9 L2554.66 769.42 L2576.24 781.44 L2597.81 746.35 L2619.39 761.23 L2640.97 751.81 L2662.54 747.1 L2684.12 752.68 L2705.69 745.86 L2727.27 759.25 L2748.85 759.5 L2770.42 762.84 L2792 768.67 L2792 953.8 Z" fill="#4bb2e7" />
<text x="1463.2" y="979" font-size="20.2" fill="#000" textLength="61" lengthAdjust="spacingAndGlyphs" transform="rotate(-45 1524.2 979)">Jan-26</text>
<text x="1504.35" y="979" font-size="20.2" fill="#000" textLength="63" lengthAdjust="spacingAndGlyphs" transform="rotate(-45 1567.35 979)">Mar-26</text>
<text x="1545.51" y="979" font-size="20.2" fill="#000" textLength="65" lengthAdjust="spacingAndGlyphs" transform="rotate(-45 1610.51 979)">May-26</text>
<text x="1598.66" y="979" font-size="20.2" fill="#000" textLength="55" lengthAdjust="spacingAndGlyphs" transform="rotate(-45 1653.66 979)">Jul-26</text>
<text x="1633.81" y="979" font-size="20.2" fill="#000" textLength="63" lengthAdjust="spacingAndGlyphs" transform="rotate(-45 1696.81 979)">Sep-26</text>
<text x="1675.96" y="979" font-size="20.2" fill="#000" textLength="64" lengthAdjust="spacingAndGlyphs" transform="rotate(-45 1739.96 979)">Nov-26</text>
<text x="1722.12" y="979" font-size="20.2" fill="#000" textLength="61" lengthAdjust="spacingAndGlyphs" transform="rotate(-45 1783.12 979)">Jan-27</text>
<text x="1763.27" y="979" font-size="20.2" fill="#000" textLength="63" lengthAdjust="spacingAndGlyphs" transform="rotate(-45 1826.27 979)">Mar-27</text>
<text x="1804.42" y="979" font-size="20.2" fill="#000" textLength="65" lengthAdjust="spacingAndGlyphs" transform="rotate(-45 1869.42 979)">May-27</text>
<text x="1857.57" y="979" font-size="20.2" fill="#000" textLength="55" lengthAdjust="spacingAndGlyphs" transform="rotate(-45 1912.57 979)">Jul-27</text>
<text x="1892.73" y="979" font-size="20.2" fill="#000" textLength="63" lengthAdjust="spacingAndGlyphs" transform="rotate(-45 1955.73 979)">Sep-27</text>
<text x="1934.88" y="979" font-size="20.2" fill="#000" textLength="64" lengthAdjust="spacingAndGlyphs" transform="rotate(-45 1998.88 979)">Nov-27</text>
<text x="1981.03" y="979" font-size="20.2" fill="#000" textLength="61" lengthAdjust="spacingAndGlyphs" transform="rotate(-45 2042.03 979)">Jan-28</text>
<text x="2022.18" y="979" font-size="20.2" fill="#000" textLength="63" lengthAdjust="spacingAndGlyphs" transform="rotate(-45 2085.18 979)">Mar-28</text>
<text x="2063.34" y="979" font-size="20.2" fill="#000" textLength="65" lengthAdjust="spacingAndGlyphs" transform="rotate(-45 2128.34 979)">May-28</text>
<text x="2116.49" y="979" font-size="20.2" fill="#000" textLength="55" lengthAdjust="spacingAndGlyphs" transform="rotate(-45 2171.49 979)">Jul-28</text>
<text x="2151.64" y="979" font-size="20.2" fill="#000" textLength="63" lengthAdjust="spacingAndGlyphs" transform="rotate(-45 2214.64 979)">Sep-28</text>
<text x="2193.79" y="979" font-size="20.2" fill="#000" textLength="64" lengthAdjust="spacingAndGlyphs" transform="rotate(-45 2257.79 979)">Nov-28</text>
<text x="2239.95" y="979" font-size="20.2" fill="#000" textLength="61" lengthAdjust="spacingAndGlyphs" transform="rotate(-45 2300.95 979)">Jan-29</text>
<text x="2281.1" y="979" font-size="20.2" fill="#000" textLength="63" lengthAdjust="spacingAndGlyphs" transform="rotate(-45 2344.1 979)">Mar-29</text>
<text x="2322.25" y="979" font-size="20.2" fill="#000" textLength="65" lengthAdjust="spacingAndGlyphs" transform="rotate(-45 2387.25 979)">May-29</text>
<text x="2375.4" y="979" font-size="20.2" fill="#000" textLength="55" lengthAdjust="spacingAndGlyphs" transform="rotate(-45 2430.4 979)">Jul-29</text>
<text x="2410.56" y="979" font-size="20.2" fill="#000" textLength="63" lengthAdjust="spacingAndGlyphs" transform="rotate(-45 2473.56 979)">Sep-29</text>
<text x="2452.71" y="979" font-size="20.2" fill="#000" textLength="64" lengthAdjust="spacingAndGlyphs" transform="rotate(-45 2516.71 979)">Nov-29</text>
<text x="2498.86" y="979" font-size="20.2" fill="#000" textLength="61" lengthAdjust="spacingAndGlyphs" transform="rotate(-45 2559.86 979)">Jan-30</text>
<text x="2540.01" y="979" font-size="20.2" fill="#000" textLength="63" lengthAdjust="spacingAndGlyphs" transform="rotate(-45 2603.01 979)">Mar-30</text>
<text x="2581.17" y="979" font-size="20.2" fill="#000" textLength="65" lengthAdjust="spacingAndGlyphs" transform="rotate(-45 2646.17 979)">May-30</text>
<text x="2634.32" y="979" font-size="20.2" fill="#000" textLength="55" lengthAdjust="spacingAndGlyphs" transform="rotate(-45 2689.32 979)">Jul-30</text>
<text x="2669.47" y="979" font-size="20.2" fill="#000" textLength="63" lengthAdjust="spacingAndGlyphs" transform="rotate(-45 2732.47 979)">Sep-30</text>
<text x="2711.62" y="979" font-size="20.2" fill="#000" textLength="64" lengthAdjust="spacingAndGlyphs" transform="rotate(-45 2775.62 979)">Nov-30</text>
<text x="442.5" y="1097.3" font-size="33.5" fill="#000" font-weight="700" textLength="416" lengthAdjust="spacingAndGlyphs" style="stroke:#000;stroke-width:0.9px" >CASH BALANCE - $'000</text>
<line x1="178.7" y1="1487.5" x2="1308.5" y2="1487.5" stroke="#5fa3cc" stroke-width="1" />
<line x1="178.7" y1="1418.5" x2="1308.5" y2="1418.5" stroke="#5fa3cc" stroke-width="1" />
<line x1="178.7" y1="1350.5" x2="1308.5" y2="1350.5" stroke="#5fa3cc" stroke-width="1" />
<line x1="178.7" y1="1281.5" x2="1308.5" y2="1281.5" stroke="#5fa3cc" stroke-width="1" />
<line x1="178.7" y1="1213.5" x2="1308.5" y2="1213.5" stroke="#5fa3cc" stroke-width="1" />
<line x1="178.7" y1="1144.5" x2="1308.5" y2="1144.5" stroke="#5fa3cc" stroke-width="1" />
<rect x="135.5" y="1555.8" width="6.5" height="2.6" fill="#000" />
<text x="117.5" y="1494.72" font-size="21.2" fill="#000" font-weight="700" textLength="37" lengthAdjust="spacingAndGlyphs" style="stroke:#000;stroke-width:0.7px" >500</text>
<text x="99" y="1426.13" font-size="21.2" fill="#000" font-weight="700" textLength="55.5" lengthAdjust="spacingAndGlyphs" style="stroke:#000;stroke-width:0.7px" >1,000</text>
<text x="99" y="1357.55" font-size="21.2" fill="#000" font-weight="700" textLength="55.5" lengthAdjust="spacingAndGlyphs" style="stroke:#000;stroke-width:0.7px" >1,500</text>
<text x="99" y="1288.97" font-size="21.2" fill="#000" font-weight="700" textLength="55.5" lengthAdjust="spacingAndGlyphs" style="stroke:#000;stroke-width:0.7px" >2,000</text>
<text x="99" y="1220.38" font-size="21.2" fill="#000" font-weight="700" textLength="55.5" lengthAdjust="spacingAndGlyphs" style="stroke:#000;stroke-width:0.7px" >2,500</text>
<text x="99" y="1151.8" font-size="21.2" fill="#000" font-weight="700" textLength="55.5" lengthAdjust="spacingAndGlyphs" style="stroke:#000;stroke-width:0.7px" >3,000</text>
<rect x="221.18" y="1418.83" width="141" height="137.17" fill="#4bb2e7" />
<text x="266.68" y="1609" font-size="21.2" fill="#000" font-weight="700" textLength="50" lengthAdjust="spacingAndGlyphs" style="stroke:#000;stroke-width:0.7px" >2026</text>
<rect x="447.14" y="1381.8" width="141" height="174.2" fill="#4bb2e7" />
<text x="492.64" y="1609" font-size="21.2" fill="#000" font-weight="700" textLength="50" lengthAdjust="spacingAndGlyphs" style="stroke:#000;stroke-width:0.7px" >2027</text>
<rect x="673.1" y="1332.97" width="141" height="223.03" fill="#4bb2e7" />
<text x="718.6" y="1609" font-size="21.2" fill="#000" font-weight="700" textLength="50" lengthAdjust="spacingAndGlyphs" style="stroke:#000;stroke-width:0.7px" >2028</text>
<rect x="899.06" y="1270.01" width="141" height="285.99" fill="#4bb2e7" />
<text x="944.56" y="1609" font-size="21.2" fill="#000" font-weight="700" textLength="50" lengthAdjust="spacingAndGlyphs" style="stroke:#000;stroke-width:0.7px" >2029</text>
<rect x="1125.02" y="1192.1" width="141" height="363.9" fill="#4bb2e7" />
<text x="1170.52" y="1609" font-size="21.2" fill="#000" font-weight="700" textLength="50" lengthAdjust="spacingAndGlyphs" style="stroke:#000;stroke-width:0.7px" >2030</text>
<line x1="177.9" y1="1556.3" x2="1309.3" y2="1556.3" stroke="#3f6fbd" stroke-width="2" />
<line x1="178.7" y1="1556" x2="178.7" y2="1563.8" stroke="#3f6fbd" stroke-width="2" />
<line x1="291.68" y1="1556" x2="291.68" y2="1560.8" stroke="#3f6fbd" stroke-width="2" />
<line x1="404.66" y1="1556" x2="404.66" y2="1563.8" stroke="#3f6fbd" stroke-width="2" />
<line x1="517.64" y1="1556" x2="517.64" y2="1560.8" stroke="#3f6fbd" stroke-width="2" />
<line x1="630.62" y1="1556" x2="630.62" y2="1563.8" stroke="#3f6fbd" stroke-width="2" />
<line x1="743.6" y1="1556" x2="743.6" y2="1560.8" stroke="#3f6fbd" stroke-width="2" />
<line x1="856.58" y1="1556" x2="856.58" y2="1563.8" stroke="#3f6fbd" stroke-width="2" />
<line x1="969.56" y1="1556" x2="969.56" y2="1560.8" stroke="#3f6fbd" stroke-width="2" />
<line x1="1082.54" y1="1556" x2="1082.54" y2="1563.8" stroke="#3f6fbd" stroke-width="2" />
<line x1="1195.52" y1="1556" x2="1195.52" y2="1560.8" stroke="#3f6fbd" stroke-width="2" />
<line x1="1308.5" y1="1556" x2="1308.5" y2="1563.8" stroke="#3f6fbd" stroke-width="2" />
<text x="1906.5" y="1093.3" font-size="33.5" fill="#000" font-weight="700" textLength="416" lengthAdjust="spacingAndGlyphs" style="stroke:#000;stroke-width:0.9px" >CASH BALANCE - $'000</text>
<line x1="1530.5" y1="1486.5" x2="2791.6" y2="1486.5" stroke="#5fa3cc" stroke-width="1" />
<line x1="1530.5" y1="1418.5" x2="2791.6" y2="1418.5" stroke="#5fa3cc" stroke-width="1" />
<line x1="1530.5" y1="1350.5" x2="2791.6" y2="1350.5" stroke="#5fa3cc" stroke-width="1" />
<line x1="1530.5" y1="1282.5" x2="2791.6" y2="1282.5" stroke="#5fa3cc" stroke-width="1" />
<line x1="1530.5" y1="1214.5" x2="2791.6" y2="1214.5" stroke="#5fa3cc" stroke-width="1" />
<line x1="1530.5" y1="1147.5" x2="2791.6" y2="1147.5" stroke="#5fa3cc" stroke-width="1" />
<rect x="1487" y="1554.6" width="6.5" height="2.6" fill="#000" />
<text x="1469" y="1494.13" font-size="21.2" fill="#000" font-weight="700" textLength="37" lengthAdjust="spacingAndGlyphs" style="stroke:#000;stroke-width:0.7px" >500</text>
<text x="1450.5" y="1426.17" font-size="21.2" fill="#000" font-weight="700" textLength="55.5" lengthAdjust="spacingAndGlyphs" style="stroke:#000;stroke-width:0.7px" >1,000</text>
<text x="1450.5" y="1358.2" font-size="21.2" fill="#000" font-weight="700" textLength="55.5" lengthAdjust="spacingAndGlyphs" style="stroke:#000;stroke-width:0.7px" >1,500</text>
<text x="1450.5" y="1290.23" font-size="21.2" fill="#000" font-weight="700" textLength="55.5" lengthAdjust="spacingAndGlyphs" style="stroke:#000;stroke-width:0.7px" >2,000</text>
<text x="1450.5" y="1222.27" font-size="21.2" fill="#000" font-weight="700" textLength="55.5" lengthAdjust="spacingAndGlyphs" style="stroke:#000;stroke-width:0.7px" >2,500</text>
<text x="1450.5" y="1154.3" font-size="21.2" fill="#000" font-weight="700" textLength="55.5" lengthAdjust="spacingAndGlyphs" style="stroke:#000;stroke-width:0.7px" >3,000</text>
<path d="M1530.5 1554.8 L1530.5 1438.03 L1551.87 1444.42 L1573.25 1435.04 L1594.62 1435.04 L1616 1433.07 L1637.37 1431.1 L1658.75 1430.29 L1680.12 1428.29 L1701.5 1426.3 L1722.87 1424.3 L1744.25 1421.72 L1765.62 1419.14 L1786.99 1417.24 L1808.37 1415.33 L1829.74 1412.21 L1851.12 1409.08 L1872.49 1405.95 L1893.87 1402.37 L1915.24 1398.79 L1936.62 1395.21 L1957.99 1392.43 L1979.37 1389.64 L2000.74 1386.51 L2022.12 1383.39 L2043.49 1380.26 L2064.86 1376.8 L2086.24 1373.33 L2107.61 1368.93 L2128.99 1364.54 L2150.36 1360.14 L2171.74 1355.79 L2193.11 1351.13 L2214.49 1346.46 L2235.86 1341.79 L2257.24 1337.94 L2278.61 1334.09 L2299.98 1330.24 L2321.36 1325.28 L2342.73 1320.32 L2364.11 1313.93 L2385.48 1308.22 L2406.86 1302.51 L2428.23 1296.8 L2449.61 1291.81 L2470.98 1286.83 L2492.36 1281.85 L2513.73 1276.86 L2535.11 1271.88 L2556.48 1266.89 L2577.85 1261.32 L2599.23 1254.86 L2620.6 1248.41 L2641.98 1242.22 L2663.35 1236.04 L2684.73 1228.29 L2706.1 1220.9 L2727.48 1213.52 L2748.85 1206.13 L2770.23 1200.15 L2791.6 1194.17 L2791.6 1554.8 Z" fill="#4bb2e7" />
<line x1="1529.7" y1="1555.1" x2="2792.4" y2="1555.1" stroke="#3f6fbd" stroke-width="2" />
<line x1="1530.5" y1="1554.8" x2="1530.5" y2="1562.6" stroke="#3f6fbd" stroke-width="2" />
<line x1="1551.87" y1="1554.8" x2="1551.87" y2="1559.6" stroke="#3f6fbd" stroke-width="2" />
<line x1="1573.25" y1="1554.8" x2="1573.25" y2="1559.6" stroke="#3f6fbd" stroke-width="2" />
<line x1="1594.62" y1="1554.8" x2="1594.62" y2="1562.6" stroke="#3f6fbd" stroke-width="2" />
<line x1="1616" y1="1554.8" x2="1616" y2="1559.6" stroke="#3f6fbd" stroke-width="2" />
<line x1="1637.37" y1="1554.8" x2="1637.37" y2="1559.6" stroke="#3f6fbd" stroke-width="2" />
<line x1="1658.75" y1="1554.8" x2="1658.75" y2="1562.6" stroke="#3f6fbd" stroke-width="2" />
<line x1="1680.12" y1="1554.8" x2="1680.12" y2="1559.6" stroke="#3f6fbd" stroke-width="2" />
<line x1="1701.5" y1="1554.8" x2="1701.5" y2="1559.6" stroke="#3f6fbd" stroke-width="2" />
<line x1="1722.87" y1="1554.8" x2="1722.87" y2="1562.6" stroke="#3f6fbd" stroke-width="2" />
<line x1="1744.25" y1="1554.8" x2="1744.25" y2="1559.6" stroke="#3f6fbd" stroke-width="2" />
<line x1="1765.62" y1="1554.8" x2="1765.62" y2="1559.6" stroke="#3f6fbd" stroke-width="2" />
<line x1="1786.99" y1="1554.8" x2="1786.99" y2="1562.6" stroke="#3f6fbd" stroke-width="2" />
<line x1="1808.37" y1="1554.8" x2="1808.37" y2="1559.6" stroke="#3f6fbd" stroke-width="2" />
<line x1="1829.74" y1="1554.8" x2="1829.74" y2="1559.6" stroke="#3f6fbd" stroke-width="2" />
<line x1="1851.12" y1="1554.8" x2="1851.12" y2="1562.6" stroke="#3f6fbd" stroke-width="2" />
<line x1="1872.49" y1="1554.8" x2="1872.49" y2="1559.6" stroke="#3f6fbd" stroke-width="2" />
<line x1="1893.87" y1="1554.8" x2="1893.87" y2="1559.6" stroke="#3f6fbd" stroke-width="2" />
<line x1="1915.24" y1="1554.8" x2="1915.24" y2="1562.6" stroke="#3f6fbd" stroke-width="2" />
<line x1="1936.62" y1="1554.8" x2="1936.62" y2="1559.6" stroke="#3f6fbd" stroke-width="2" />
<line x1="1957.99" y1="1554.8" x2="1957.99" y2="1559.6" stroke="#3f6fbd" stroke-width="2" />
<line x1="1979.37" y1="1554.8" x2="1979.37" y2="1562.6" stroke="#3f6fbd" stroke-width="2" />
<line x1="2000.74" y1="1554.8" x2="2000.74" y2="1559.6" stroke="#3f6fbd" stroke-width="2" />
<line x1="2022.12" y1="1554.8" x2="2022.12" y2="1559.6" stroke="#3f6fbd" stroke-width="2" />
<line x1="2043.49" y1="1554.8" x2="2043.49" y2="1562.6" stroke="#3f6fbd" stroke-width="2" />
<line x1="2064.86" y1="1554.8" x2="2064.86" y2="1559.6" stroke="#3f6fbd" stroke-width="2" />
<line x1="2086.24" y1="1554.8" x2="2086.24" y2="1559.6" stroke="#3f6fbd" stroke-width="2" />
<line x1="2107.61" y1="1554.8" x2="2107.61" y2="1562.6" stroke="#3f6fbd" stroke-width="2" />
<line x1="2128.99" y1="1554.8" x2="2128.99" y2="1559.6" stroke="#3f6fbd" stroke-width="2" />
<line x1="2150.36" y1="1554.8" x2="2150.36" y2="1559.6" stroke="#3f6fbd" stroke-width="2" />
<line x1="2171.74" y1="1554.8" x2="2171.74" y2="1562.6" stroke="#3f6fbd" stroke-width="2" />
<line x1="2193.11" y1="1554.8" x2="2193.11" y2="1559.6" stroke="#3f6fbd" stroke-width="2" />
<line x1="2214.49" y1="1554.8" x2="2214.49" y2="1559.6" stroke="#3f6fbd" stroke-width="2" />
<line x1="2235.86" y1="1554.8" x2="2235.86" y2="1562.6" stroke="#3f6fbd" stroke-width="2" />
<line x1="2257.24" y1="1554.8" x2="2257.24" y2="1559.6" stroke="#3f6fbd" stroke-width="2" />
<line x1="2278.61" y1="1554.8" x2="2278.61" y2="1559.6" stroke="#3f6fbd" stroke-width="2" />
<line x1="2299.98" y1="1554.8" x2="2299.98" y2="1562.6" stroke="#3f6fbd" stroke-width="2" />
<line x1="2321.36" y1="1554.8" x2="2321.36" y2="1559.6" stroke="#3f6fbd" stroke-width="2" />
<line x1="2342.73" y1="1554.8" x2="2342.73" y2="1559.6" stroke="#3f6fbd" stroke-width="2" />
<line x1="2364.11" y1="1554.8" x2="2364.11" y2="1562.6" stroke="#3f6fbd" stroke-width="2" />
<line x1="2385.48" y1="1554.8" x2="2385.48" y2="1559.6" stroke="#3f6fbd" stroke-width="2" />
<line x1="2406.86" y1="1554.8" x2="2406.86" y2="1559.6" stroke="#3f6fbd" stroke-width="2" />
<line x1="2428.23" y1="1554.8" x2="2428.23" y2="1562.6" stroke="#3f6fbd" stroke-width="2" />
<line x1="2449.61" y1="1554.8" x2="2449.61" y2="1559.6" stroke="#3f6fbd" stroke-width="2" />
<line x1="2470.98" y1="1554.8" x2="2470.98" y2="1559.6" stroke="#3f6fbd" stroke-width="2" />
<line x1="2492.36" y1="1554.8" x2="2492.36" y2="1562.6" stroke="#3f6fbd" stroke-width="2" />
<line x1="2513.73" y1="1554.8" x2="2513.73" y2="1559.6" stroke="#3f6fbd" stroke-width="2" />
<line x1="2535.11" y1="1554.8" x2="2535.11" y2="1559.6" stroke="#3f6fbd" stroke-width="2" />
<line x1="2556.48" y1="1554.8" x2="2556.48" y2="1562.6" stroke="#3f6fbd" stroke-width="2" />
<line x1="2577.85" y1="1554.8" x2="2577.85" y2="1559.6" stroke="#3f6fbd" stroke-width="2" />
<line x1="2599.23" y1="1554.8" x2="2599.23" y2="1559.6" stroke="#3f6fbd" stroke-width="2" />
<line x1="2620.6" y1="1554.8" x2="2620.6" y2="1562.6" stroke="#3f6fbd" stroke-width="2" />
<line x1="2641.98" y1="1554.8" x2="2641.98" y2="1559.6" stroke="#3f6fbd" stroke-width="2" />
<line x1="2663.35" y1="1554.8" x2="2663.35" y2="1559.6" stroke="#3f6fbd" stroke-width="2" />
<line x1="2684.73" y1="1554.8" x2="2684.73" y2="1562.6" stroke="#3f6fbd" stroke-width="2" />
<line x1="2706.1" y1="1554.8" x2="2706.1" y2="1559.6" stroke="#3f6fbd" stroke-width="2" />
<line x1="2727.48" y1="1554.8" x2="2727.48" y2="1559.6" stroke="#3f6fbd" stroke-width="2" />
<line x1="2748.85" y1="1554.8" x2="2748.85" y2="1562.6" stroke="#3f6fbd" stroke-width="2" />
<line x1="2770.23" y1="1554.8" x2="2770.23" y2="1559.6" stroke="#3f6fbd" stroke-width="2" />
<line x1="2791.6" y1="1554.8" x2="2791.6" y2="1559.6" stroke="#3f6fbd" stroke-width="2" />
<text x="1474.7" y="1582" font-size="20.2" fill="#000" textLength="61" lengthAdjust="spacingAndGlyphs" transform="rotate(-45 1535.7 1582)">Jan-26</text>
<text x="1538.82" y="1582" font-size="20.2" fill="#000" textLength="61" lengthAdjust="spacingAndGlyphs" transform="rotate(-45 1599.82 1582)">Apr-26</text>
<text x="1608.95" y="1582" font-size="20.2" fill="#000" textLength="55" lengthAdjust="spacingAndGlyphs" transform="rotate(-45 1663.95 1582)">Jul-26</text>
<text x="1667.07" y="1582" font-size="20.2" fill="#000" textLength="61" lengthAdjust="spacingAndGlyphs" transform="rotate(-45 1728.07 1582)">Oct-26</text>
<text x="1731.19" y="1582" font-size="20.2" fill="#000" textLength="61" lengthAdjust="spacingAndGlyphs" transform="rotate(-45 1792.19 1582)">Jan-27</text>
<text x="1795.32" y="1582" font-size="20.2" fill="#000" textLength="61" lengthAdjust="spacingAndGlyphs" transform="rotate(-45 1856.32 1582)">Apr-27</text>
<text x="1865.44" y="1582" font-size="20.2" fill="#000" textLength="55" lengthAdjust="spacingAndGlyphs" transform="rotate(-45 1920.44 1582)">Jul-27</text>
<text x="1923.57" y="1582" font-size="20.2" fill="#000" textLength="61" lengthAdjust="spacingAndGlyphs" transform="rotate(-45 1984.57 1582)">Oct-27</text>
<text x="1987.69" y="1582" font-size="20.2" fill="#000" textLength="61" lengthAdjust="spacingAndGlyphs" transform="rotate(-45 2048.69 1582)">Jan-28</text>
<text x="2051.81" y="1582" font-size="20.2" fill="#000" textLength="61" lengthAdjust="spacingAndGlyphs" transform="rotate(-45 2112.81 1582)">Apr-28</text>
<text x="2121.94" y="1582" font-size="20.2" fill="#000" textLength="55" lengthAdjust="spacingAndGlyphs" transform="rotate(-45 2176.94 1582)">Jul-28</text>
<text x="2180.06" y="1582" font-size="20.2" fill="#000" textLength="61" lengthAdjust="spacingAndGlyphs" transform="rotate(-45 2241.06 1582)">Oct-28</text>
<text x="2244.18" y="1582" font-size="20.2" fill="#000" textLength="61" lengthAdjust="spacingAndGlyphs" transform="rotate(-45 2305.18 1582)">Jan-29</text>
<text x="2308.31" y="1582" font-size="20.2" fill="#000" textLength="61" lengthAdjust="spacingAndGlyphs" transform="rotate(-45 2369.31 1582)">Apr-29</text>
<text x="2378.43" y="1582" font-size="20.2" fill="#000" textLength="55" lengthAdjust="spacingAndGlyphs" transform="rotate(-45 2433.43 1582)">Jul-29</text>
<text x="2436.56" y="1582" font-size="20.2" fill="#000" textLength="61" lengthAdjust="spacingAndGlyphs" transform="rotate(-45 2497.56 1582)">Oct-29</text>
<text x="2500.68" y="1582" font-size="20.2" fill="#000" textLength="61" lengthAdjust="spacingAndGlyphs" transform="rotate(-45 2561.68 1582)">Jan-30</text>
<text x="2564.8" y="1582" font-size="20.2" fill="#000" textLength="61" lengthAdjust="spacingAndGlyphs" transform="rotate(-45 2625.8 1582)">Apr-30</text>
<text x="2634.93" y="1582" font-size="20.2" fill="#000" textLength="55" lengthAdjust="spacingAndGlyphs" transform="rotate(-45 2689.93 1582)">Jul-30</text>
<text x="2693.05" y="1582" font-size="20.2" fill="#000" textLength="61" lengthAdjust="spacingAndGlyphs" transform="rotate(-45 2754.05 1582)">Oct-30</text>
<rect x="809.6" y="1667.6" width="2.2" height="3" fill="#000" />
<rect x="824.5" y="1668" width="6.5" height="2.5" fill="#000" />
<text x="1827" y="1692.3" font-size="33.5" fill="#000" font-weight="700" textLength="557" lengthAdjust="spacingAndGlyphs" style="stroke:#000;stroke-width:0.9px" >OPERATING CASH FLOW - $'000</text>
</svg>
<svg class="abs vscroll" style="left:2860px;top:277px" width="31" height="1396" viewBox="2860 277 31 1396" font-family='"Liberation Sans", sans-serif'>
<rect x="2860" y="277" width="31" height="1396" fill="#0a0a0a" />
<rect x="2863.3" y="280" width="26" height="1391.5" fill="#141414" rx="13"/>
<path d="M2870 296 l6.2 -8.8 l6.2 8.8 z" fill="#9a9a9a" stroke="#9a9a9a" stroke-width="1.6" stroke-linejoin="round"/>
<rect x="2870.2" y="303.8" width="12" height="661.2" fill="#9b9b9b" rx="6"/>
<path d="M2869.8 1655.2 l6.2 8.2 l6.2 -8.2 z" fill="#9a9a9a" stroke="#9a9a9a" stroke-width="1.6" stroke-linejoin="round"/>
<rect x="2860" y="1718" width="31" height="33" fill="#141414" />
</svg>
<svg class="abs bottom" style="left:11px;top:1670px" width="2880" height="81" viewBox="11 1670 2880 81" font-family='"Liberation Sans", sans-serif'>
<rect x="11" y="1670" width="2880" height="48" fill="#0a0a0a" />
<rect x="11" y="1718" width="2880" height="33" fill="#141414" />
<line x1="11" y1="1718" x2="2891" y2="1718" stroke="#2b2b2b" stroke-width="1" />
<path d="M54.2 1686.8 l-7.4 6.5 l7.4 6.5" fill="none" stroke="#9a9a9a" stroke-width="1.8" stroke-linecap="round" stroke-linejoin="round"/>
<path d="M95.6 1686.8 l7.4 6.5 l-7.4 6.5" fill="none" stroke="#dcdcdc" stroke-width="1.8" stroke-linecap="round" stroke-linejoin="round"/>
<text x="190" y="1702.5" font-size="21.5" fill="#fff" textLength="82.5" lengthAdjust="spacingAndGlyphs" >Contents</text>
<line x1="292.5" y1="1680" x2="292.5" y2="1708" stroke="#4a4a4a" stroke-width="1.2" />
<rect x="299.2" y="1676" width="127.9" height="35.5" fill="#ffef6e" rx="6"/>
<text x="312.65" y="1702.5" font-size="21.5" fill="#111" textLength="101" lengthAdjust="spacingAndGlyphs" >Dashboard</text>
<line x1="433.4" y1="1680" x2="433.4" y2="1708" stroke="#4a4a4a" stroke-width="1.2" />
<rect x="439.7" y="1676" width="106.3" height="35.5" fill="#ffef6e" rx="6"/>
<text x="453.1" y="1702.5" font-size="21.5" fill="#111" textLength="79.5" lengthAdjust="spacingAndGlyphs" >Revenue</text>
<line x1="552.5" y1="1680" x2="552.5" y2="1708" stroke="#4a4a4a" stroke-width="1.2" />
<rect x="559" y="1676" width="158.3" height="35.5" fill="#ffef6e" rx="6"/>
<text x="571.4" y="1702.5" font-size="21.5" fill="#111" textLength="133.5" lengthAdjust="spacingAndGlyphs" >COGS &amp; OPEX</text>
<line x1="723.6" y1="1680" x2="723.6" y2="1708" stroke="#4a4a4a" stroke-width="1.2" />
<rect x="729.9" y="1676" width="88.9" height="35.5" fill="#ffef6e" rx="6"/>
<text x="743.1" y="1702.5" font-size="21.5" fill="#111" textLength="62.5" lengthAdjust="spacingAndGlyphs" >Payroll</text>
<line x1="825.3" y1="1680" x2="825.3" y2="1708" stroke="#4a4a4a" stroke-width="1.2" />
<rect x="831.8" y="1676" width="87.4" height="35.5" fill="#ffef6e" rx="6"/>
<text x="844.75" y="1702.5" font-size="21.5" fill="#111" textLength="61.5" lengthAdjust="spacingAndGlyphs" >CAPEX</text>
<line x1="925.7" y1="1680" x2="925.7" y2="1708" stroke="#4a4a4a" stroke-width="1.2" />
<rect x="932.2" y="1676" width="112.7" height="35.5" fill="#ffef6e" rx="6"/>
<text x="945.8" y="1702.5" font-size="21.5" fill="#111" textLength="85.5" lengthAdjust="spacingAndGlyphs" >CapTable</text>
<line x1="1051.2" y1="1680" x2="1051.2" y2="1708" stroke="#4a4a4a" stroke-width="1.2" />
<rect x="1057.5" y="1676" width="90.5" height="35.5" fill="#ffef6e" rx="6"/>
<text x="1070.5" y="1702.5" font-size="21.5" fill="#111" textLength="64.5" lengthAdjust="spacingAndGlyphs" >Capital</text>
<line x1="1154.5" y1="1680" x2="1154.5" y2="1708" stroke="#4a4a4a" stroke-width="1.2" />
<rect x="1161" y="1676" width="41.7" height="35.5" fill="#4bb2e7" rx="6"/>
<text x="1174.1" y="1702.5" font-size="21.5" fill="#111" textLength="15.5" lengthAdjust="spacingAndGlyphs" >IS</text>
<line x1="1209.2" y1="1680" x2="1209.2" y2="1708" stroke="#4a4a4a" stroke-width="1.2" />
<rect x="1215.7" y="1676" width="48.1" height="35.5" fill="#4bb2e7" rx="6"/>
<text x="1228" y="1702.5" font-size="21.5" fill="#111" textLength="23.5" lengthAdjust="spacingAndGlyphs" >CF</text>
<line x1="1270.25" y1="1680" x2="1270.25" y2="1708" stroke="#4a4a4a" stroke-width="1.2" />
<rect x="1276.7" y="1676" width="48.1" height="35.5" fill="#4bb2e7" rx="6"/>
<text x="1289.25" y="1702.5" font-size="21.5" fill="#111" textLength="23" lengthAdjust="spacingAndGlyphs" >BS</text>
<line x1="1331.3" y1="1680" x2="1331.3" y2="1708" stroke="#4a4a4a" stroke-width="1.2" />
<rect x="1337.8" y="1676" width="115.3" height="35.5" fill="#4bb2e7" rx="6"/>
<text x="1351.2" y="1702.5" font-size="21.5" fill="#111" textLength="88.5" lengthAdjust="spacingAndGlyphs" >Scenarios</text>
<line x1="1459.4" y1="1680" x2="1459.4" y2="1708" stroke="#4a4a4a" stroke-width="1.2" />
<rect x="1465.7" y="1676" width="115.3" height="35.5" fill="#4bb2e7" rx="6"/>
<text x="1479.35" y="1702.5" font-size="21.5" fill="#111" textLength="88" lengthAdjust="spacingAndGlyphs" >Valuation</text>
<line x1="1587.5" y1="1680" x2="1587.5" y2="1708" stroke="#4a4a4a" stroke-width="1.2" />
<rect x="1594" y="1676" width="114.2" height="35.5" fill="#4bb2e7" rx="6"/>
<text x="1607.1" y="1702.5" font-size="21.5" fill="#111" textLength="88" lengthAdjust="spacingAndGlyphs" >Summary</text>
<line x1="1714.5" y1="1680" x2="1714.5" y2="1708" stroke="#4a4a4a" stroke-width="1.2" />
<rect x="1720.8" y="1676" width="48" height="35.5" fill="#4bb2e7" rx="6"/>
<text x="1733.3" y="1702.5" font-size="21.5" fill="#111" textLength="23" lengthAdjust="spacingAndGlyphs" >BE</text>
<line x1="1775.3" y1="1680" x2="1775.3" y2="1708" stroke="#4a4a4a" stroke-width="1.2" />
<rect x="1781.8" y="1676" width="72.5" height="35.5" fill="#4bb2e7" rx="6"/>
<text x="1794.55" y="1702.5" font-size="21.5" fill="#111" textLength="47" lengthAdjust="spacingAndGlyphs" >ROIC</text>
<line x1="1860.8" y1="1680" x2="1860.8" y2="1708" stroke="#4a4a4a" stroke-width="1.2" />
<defs><linearGradient id="actg" x1="0" y1="0" x2="0" y2="1"><stop offset="0" stop-color="#fff"/><stop offset="0.45" stop-color="#f4f9fd"/><stop offset="1" stop-color="#cfe4f6"/></linearGradient></defs>
<path d="M1867.3 1670 H1952 V1705.5 a6 6 0 0 1 -6 6 H1873.3 a6 6 0 0 1 -6 -6 Z" fill="url(#actg)" />
<text x="1879.3" y="1698.2" font-size="21.5" fill="#111" textLength="60" lengthAdjust="spacingAndGlyphs" >Charts</text>
<rect x="1879.5" y="1705.1" width="60.5" height="2.7" fill="#1e8a4c" />
<line x1="1958.5" y1="1680" x2="1958.5" y2="1708" stroke="#4a4a4a" stroke-width="1.2" />
<rect x="1965" y="1676" width="64" height="35.5" fill="#4bb2e7" rx="6"/>
<text x="1977.75" y="1702.5" font-size="21.5" fill="#111" textLength="38.5" lengthAdjust="spacingAndGlyphs" >KPIs</text>
<line x1="2035.5" y1="1680" x2="2035.5" y2="1708" stroke="#4a4a4a" stroke-width="1.2" />
<svg x="2041.9" y="1670" width="30.1" height="46" viewBox="2041.9 1670 30.1 46" overflow="hidden">
<rect x="2041.9" y="1676" width="110" height="35.5" fill="#4bb2e7" rx="6"/>
<text x="2054.5" y="1702.5" font-size="21.5" fill="#111" textLength="88.5" lengthAdjust="spacingAndGlyphs" >Scenarios</text>
</svg>
<circle cx="2089.4" cy="1692.9" r="2.3" fill="#e6e6e6"/>
<circle cx="2095.4" cy="1692.9" r="2.3" fill="#e6e6e6"/>
<circle cx="2101.4" cy="1692.9" r="2.3" fill="#e6e6e6"/>
<path d="M2134.6 1693 h17.4 M2143.3 1684.3 v17.4" fill="none" stroke="#e6e6e6" stroke-width="1.6" />
<rect x="2189.8" y="1686.5" width="4.2" height="4.2" rx="1" fill="#e6e6e6"/>
<rect x="2189.8" y="1692.7" width="4.2" height="4.2" rx="1" fill="#e6e6e6"/>
<rect x="2189.8" y="1698.9" width="4.2" height="4.2" rx="1" fill="#e6e6e6"/>
<rect x="2216" y="1680.5" width="643.7" height="25.2" fill="#161616" rx="12.6"/>
<path d="M2233.5 1687.2 v12 l-8.8 -6 z" fill="#9b9b9b" stroke="#9b9b9b" stroke-width="1.4" stroke-linejoin="round"/>
<rect x="2241.6" y="1687.3" width="560.4" height="11.6" fill="#9b9b9b" rx="5.8"/>
<path d="M2842.5 1687.2 v12 l8.8 -6 z" fill="#9b9b9b" stroke="#9b9b9b" stroke-width="1.4" stroke-linejoin="round"/>
<text x="27.5" y="1740.7" font-size="15.2" fill="#e6e6e6" textLength="43" lengthAdjust="spacingAndGlyphs" >Ready</text>
<g fill="none" stroke="#e6e6e6" stroke-width="1.5"><path d="M107 1743.2 h-7 v-16.2 h20.4 v5.5"/><path d="M100 1729.6 h20.4" stroke-width="2.2"/><path d="M103.2 1734 h5 M103.2 1737.5 h3.6 M103.2 1741 h3.6" stroke-width="1.3"/><circle cx="114.6" cy="1738.6" r="5.7"/><circle cx="114.6" cy="1738.6" r="2.4" fill="#e6e6e6"/></g>
<g fill="none" stroke="#e6e6e6" stroke-width="1.6" stroke-linecap="round" stroke-linejoin="round"><circle cx="155.6" cy="1727" r="2.5"/><path d="M147.2 1729.2 c2 2.2 4.2 3 5.6 3.2 h5.8 c1.4 -0.2 3.6 -1 5.6 -3.2 M152.8 1732.4 v5.6 l-3.2 6.2 M158.6 1732.4 v4.4"/><path d="M158.2 1737.8 l8 7.4 M166.2 1737.8 l-8 7.4"/></g>
<text x="172.5" y="1740.7" font-size="15.2" fill="#fff" font-weight="700" textLength="188" lengthAdjust="spacingAndGlyphs" style="stroke:#fff;stroke-width:0.35px" >Accessibility: Investigate</text>
<rect x="2445" y="1719" width="60.2" height="31.8" fill="#272727" />
<g fill="none" stroke="#fff" stroke-width="2.1"><rect x="2465.2" y="1725" width="17.7" height="18"/><path d="M2465.2 1731 h17.7 M2465.2 1737 h17.7 M2471.1 1725 v18 M2477 1725 v18"/></g>
<g fill="none" stroke="#fff" stroke-width="2.1"><rect x="2525.4" y="1725" width="19.4" height="18"/><rect x="2529.8" y="1729.3" width="10.4" height="9.8" stroke-width="1.7"/><path d="M2531.8 1731.8 h6.4 M2531.8 1734.3 h6.4 M2531.8 1736.8 h6.4" stroke-width="1.2"/></g>
<g fill="none" stroke="#fff" stroke-width="2.1"><rect x="2585.2" y="1725" width="19.8" height="18"/><path d="M2585.2 1736 h12.4 v-11 M2591.8 1725 v11" stroke-width="1.9"/></g>
<line x1="2632.5" y1="1734.5" x2="2643.5" y2="1734.5" stroke="#e6e6e6" stroke-width="1.4" />
<line x1="2653" y1="1734.5" x2="2801" y2="1734.5" stroke="#bdbdbd" stroke-width="1.3" />
<rect x="2726.3" y="1725.5" width="7" height="18" fill="#c8c8c8" rx="1"/>
<path d="M2809 1734.5 h11.4 M2814.7 1728.8 v11.4" fill="none" stroke="#e6e6e6" stroke-width="1.4" />
<text x="2840" y="1740.7" font-size="15.2" fill="#e6e6e6" textLength="39.5" lengthAdjust="spacingAndGlyphs" >110%</text>
</svg>
</body>
</html>
